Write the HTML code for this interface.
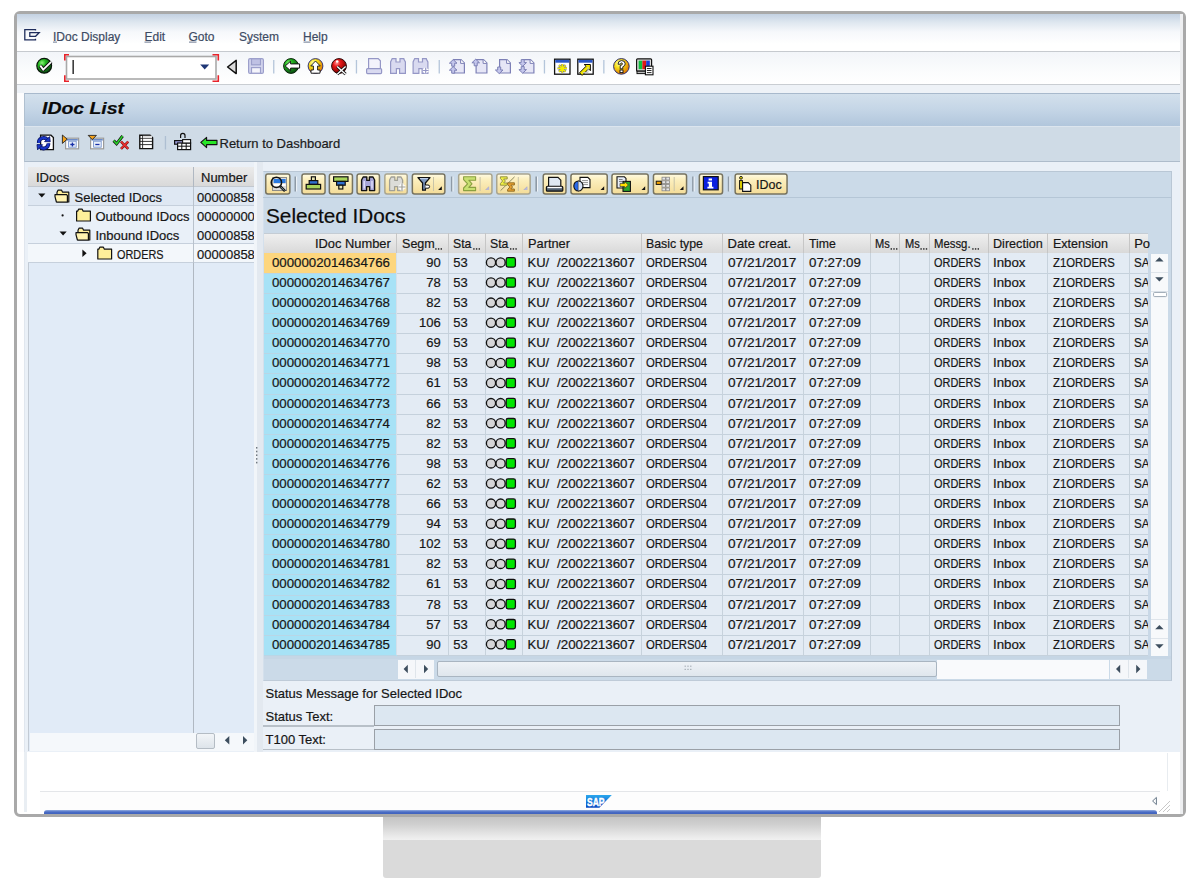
<!DOCTYPE html>
<html><head><meta charset="utf-8"><title>IDoc List</title>
<style>
html,body{margin:0;padding:0;width:1200px;height:888px;overflow:hidden;background:#fff;}
body{position:relative;font-family:"Liberation Sans",sans-serif;}
body>div,body>span,body>svg{position:absolute;box-sizing:border-box;}
.t{white-space:pre;-webkit-text-stroke-width:0.2px;}
</style></head><body>
<div style="left:383px;top:817px;width:438px;height:24px;background:linear-gradient(#c4c4c4,#cfcfcf 30%,#ececec 85%,#f2f2f2);"></div>
<div style="left:383px;top:840px;width:438px;height:38px;background:#dadada;border-radius:0 0 3px 3px;"></div>
<div style="left:14px;top:11px;width:1172px;height:806px;border:3px solid #a9a9a9;border-radius:6px;background:#fff;"></div>
<div style="left:17px;top:14px;width:1163px;height:37px;background:linear-gradient(#c3d1e2 0px,#dde6ef 8px,#f6f8fb 18px,#ffffff 30px);"></div>
<div style="left:17px;top:51px;width:1163px;height:1px;background:#c6cacf;"></div>
<div style="left:17px;top:52px;width:1163px;height:32px;background:linear-gradient(#f2f5f9,#fbfcfd 60%,#ffffff);"></div>
<div style="left:17px;top:84px;width:1163px;height:1px;background:#c9cdd2;"></div>
<div style="left:17px;top:85px;width:1163px;height:667px;background:#fdfdfe;"></div>
<div style="left:17px;top:85px;width:1163px;height:8px;background:#eef2f7;"></div>
<div style="left:24px;top:93px;width:1156px;height:33px;background:linear-gradient(#d3e0ec,#c4d5e6 50%,#b1c6dc);border-top:1px solid #a8b9cc;border-left:1px solid #b0c0d0;"></div>
<div style="left:24px;top:126px;width:1156px;height:36px;background:#cfdbe6;border-bottom:1.5px solid #aebccb;border-left:1px solid #b8c6d4;border-top:1px solid #dce5ee;"></div>
<div style="left:24px;top:162px;width:1156px;height:590px;background:#eaf0f7;border-left:1px solid #e0e6ee;"></div>
<div style="left:17px;top:752px;width:1163px;height:58px;background:#ffffff;"></div>
<div style="left:40px;top:791px;width:1120px;height:1px;background:#e4e6e9;"></div>
<div style="left:24px;top:752px;width:2.5px;height:60px;background:#e9eef3;"></div>
<div style="left:1167px;top:753px;width:1px;height:38px;background:#e8ecf0;"></div>
<div style="left:40px;top:792px;width:1120px;height:18px;background:#fdfdfd;"></div>
<div style="left:44px;top:810.3px;width:1113px;height:3.7px;background:linear-gradient(#93ade0,#4a6cc4 50%,#3f62bd);border-radius:3px 3px 0 0;"></div>
<div style="left:1180px;top:14px;width:3px;height:800px;background:#eeeff1;"></div>
<span class="t" style="left:53.00px;top:30.80px;font-size:12px;line-height:12px;color:#3d4b63;">IDoc Display</span>
<span class="t" style="left:144.50px;top:30.80px;font-size:12px;line-height:12px;color:#3d4b63;">Edit</span>
<span class="t" style="left:188.50px;top:30.80px;font-size:12px;line-height:12px;color:#3d4b63;">Goto</span>
<span class="t" style="left:239.00px;top:30.80px;font-size:12px;line-height:12px;color:#3d4b63;">System</span>
<span class="t" style="left:303.00px;top:30.80px;font-size:12px;line-height:12px;color:#3d4b63;">Help</span>
<span class="t" style="left:41.50px;top:101.40px;font-size:16px;line-height:16px;color:#0a0a0a;font-weight:bold;font-style:italic;transform:scaleX(1.214);transform-origin:0 0;">IDoc List</span>
<span class="t" style="left:219.50px;top:137.45px;font-size:13px;line-height:13px;color:#1c1c1c;">Return to Dashboard</span>
<div style="left:28px;top:167px;width:227px;height:584px;background:#e1ebf7;border-left:1.5px solid #c2cad4;"></div>
<div style="left:28px;top:167px;width:227px;height:20px;background:linear-gradient(#ebebeb,#d9d9d9);border-bottom:1px solid #c2c8cf;"></div>
<div style="left:193px;top:167px;width:1.3px;height:583px;background:#b0b8c2;"></div>
<div style="left:28px;top:187px;width:227px;height:19px;background:#dfe8f3;border-bottom:1px solid #c6d0dc;"></div>
<div style="left:28px;top:206px;width:227px;height:38px;background:#e9f0f8;border-bottom:1px solid #c6d0dc;"></div>
<div style="left:28px;top:244px;width:227px;height:19px;background:#f3f7fb;border-bottom:1px solid #c6d0dc;"></div>
<div style="left:193px;top:187px;width:1px;height:76px;background:#b9c2cc;"></div>
<span class="t" style="left:36.00px;top:170.95px;font-size:13px;line-height:13px;color:#161616;">IDocs</span>
<span class="t" style="left:201.00px;top:170.95px;font-size:13px;line-height:13px;color:#161616;">Number</span>
<span class="t" style="left:74.50px;top:190.95px;font-size:13px;line-height:13px;color:#161616;">Selected IDocs</span>
<span class="t" style="left:95.50px;top:209.95px;font-size:13px;line-height:13px;color:#161616;">Outbound IDocs</span>
<span class="t" style="left:95.50px;top:228.95px;font-size:13px;line-height:13px;color:#161616;">Inbound IDocs</span>
<span class="t" style="left:117.00px;top:247.95px;font-size:13px;line-height:13px;color:#161616;transform:scaleX(0.836);transform-origin:0 0;">ORDERS</span>
<span class="t" style="left:197.00px;top:190.95px;font-size:13px;line-height:13px;color:#161616;">00000858</span>
<span class="t" style="left:197.00px;top:209.95px;font-size:13px;line-height:13px;color:#161616;">00000000</span>
<span class="t" style="left:197.00px;top:228.95px;font-size:13px;line-height:13px;color:#161616;">00000858</span>
<span class="t" style="left:197.00px;top:247.95px;font-size:13px;line-height:13px;color:#161616;">00000858</span>
<div style="left:29.5px;top:732.5px;width:225px;height:18px;background:#f5f8fb;"></div>
<div style="left:196.3px;top:733.1px;width:19px;height:16px;background:linear-gradient(#f2f5f8,#dde4ea);border:1.3px solid #b4bcc4;border-radius:2px;"></div>
<div style="left:254px;top:162px;width:3px;height:590px;background:#f1f5f9;"></div>
<div style="left:257px;top:162px;width:6px;height:590px;background:#e3e9f0;"></div>
<div style="left:263px;top:171px;width:909px;height:510px;background:#cbdae8;border-top:1px solid #b9c7d5;border-right:1px solid #b9c7d5;border-left:1px solid #d4e0ec;border-bottom:1px solid #bfcbd8;"></div>
<div style="left:263px;top:196.5px;width:908px;height:1px;background:#b5c6d6;"></div>
<span class="t" style="left:266.40px;top:205.15px;font-size:21px;line-height:21px;color:#0c0c0c;transform:scaleX(0.988);transform-origin:0 0;">Selected IDocs</span>
<div style="left:264px;top:233px;width:884px;height:20.5px;background:linear-gradient(#efefef,#d9d9d9);border-top:1px solid #c4ccd4;border-bottom:1px solid #bcc5ce;"></div>
<div style="left:396.0px;top:233px;width:1px;height:20px;background:#c6c6c6;"></div>
<div style="left:448.0px;top:233px;width:1px;height:20px;background:#c6c6c6;"></div>
<div style="left:485.0px;top:233px;width:1px;height:20px;background:#c6c6c6;"></div>
<div style="left:522.0px;top:233px;width:1px;height:20px;background:#c6c6c6;"></div>
<div style="left:640.5px;top:233px;width:1px;height:20px;background:#c6c6c6;"></div>
<div style="left:722.0px;top:233px;width:1px;height:20px;background:#c6c6c6;"></div>
<div style="left:803.0px;top:233px;width:1px;height:20px;background:#c6c6c6;"></div>
<div style="left:870.0px;top:233px;width:1px;height:20px;background:#c6c6c6;"></div>
<div style="left:899.0px;top:233px;width:1px;height:20px;background:#c6c6c6;"></div>
<div style="left:929.0px;top:233px;width:1px;height:20px;background:#c6c6c6;"></div>
<div style="left:988.0px;top:233px;width:1px;height:20px;background:#c6c6c6;"></div>
<div style="left:1047.0px;top:233px;width:1px;height:20px;background:#c6c6c6;"></div>
<div style="left:1128.5px;top:233px;width:1px;height:20px;background:#c6c6c6;"></div>
<span class="t" style="left:315.00px;top:236.95px;font-size:13px;line-height:13px;color:#161616;transform:scaleX(0.990);transform-origin:0 0;">IDoc Number</span>
<span class="t" style="left:401.70px;top:236.95px;font-size:13px;line-height:13px;color:#161616;transform:scaleX(0.966);transform-origin:0 0;">Segm</span>
<span class="t" style="left:453.30px;top:236.95px;font-size:13px;line-height:13px;color:#161616;transform:scaleX(0.943);transform-origin:0 0;">Sta</span>
<span class="t" style="left:490.00px;top:236.95px;font-size:13px;line-height:13px;color:#161616;transform:scaleX(0.943);transform-origin:0 0;">Sta</span>
<span class="t" style="left:527.50px;top:236.95px;font-size:13px;line-height:13px;color:#161616;transform:scaleX(0.985);transform-origin:0 0;">Partner</span>
<span class="t" style="left:645.80px;top:236.95px;font-size:13px;line-height:13px;color:#161616;transform:scaleX(0.950);transform-origin:0 0;">Basic type</span>
<span class="t" style="left:727.50px;top:236.95px;font-size:13px;line-height:13px;color:#161616;">Date creat.</span>
<span class="t" style="left:809.00px;top:236.95px;font-size:13px;line-height:13px;color:#161616;transform:scaleX(0.943);transform-origin:0 0;">Time</span>
<span class="t" style="left:875.00px;top:236.95px;font-size:13px;line-height:13px;color:#161616;transform:scaleX(0.853);transform-origin:0 0;">Ms</span>
<span class="t" style="left:905.00px;top:236.95px;font-size:13px;line-height:13px;color:#161616;transform:scaleX(0.853);transform-origin:0 0;">Ms</span>
<span class="t" style="left:934.00px;top:236.95px;font-size:13px;line-height:13px;color:#161616;transform:scaleX(0.873);transform-origin:0 0;">Messg.</span>
<span class="t" style="left:993.30px;top:236.95px;font-size:13px;line-height:13px;color:#161616;transform:scaleX(0.969);transform-origin:0 0;">Direction</span>
<span class="t" style="left:1052.50px;top:236.95px;font-size:13px;line-height:13px;color:#161616;transform:scaleX(0.963);transform-origin:0 0;">Extension</span>
<span class="t" style="left:1134.20px;top:236.95px;font-size:13px;line-height:13px;color:#161616;">Po</span>
<div style="left:264px;top:253.3px;width:132.5px;height:20.6px;background:#fdd67e;"></div>
<div style="left:396.5px;top:253.3px;width:751.5px;height:20.6px;background:#e3ebf4;"></div>
<div style="left:264px;top:273.4px;width:132.5px;height:20.6px;background:#a7e2f6;"></div>
<div style="left:396.5px;top:273.4px;width:751.5px;height:20.6px;background:#e3ebf4;"></div>
<div style="left:264px;top:293.5px;width:132.5px;height:20.6px;background:#a7e2f6;"></div>
<div style="left:396.5px;top:293.5px;width:751.5px;height:20.6px;background:#e3ebf4;"></div>
<div style="left:264px;top:313.6px;width:132.5px;height:20.6px;background:#a7e2f6;"></div>
<div style="left:396.5px;top:313.6px;width:751.5px;height:20.6px;background:#e3ebf4;"></div>
<div style="left:264px;top:333.7px;width:132.5px;height:20.6px;background:#a7e2f6;"></div>
<div style="left:396.5px;top:333.7px;width:751.5px;height:20.6px;background:#e3ebf4;"></div>
<div style="left:264px;top:353.8px;width:132.5px;height:20.6px;background:#a7e2f6;"></div>
<div style="left:396.5px;top:353.8px;width:751.5px;height:20.6px;background:#e3ebf4;"></div>
<div style="left:264px;top:373.9px;width:132.5px;height:20.6px;background:#a7e2f6;"></div>
<div style="left:396.5px;top:373.9px;width:751.5px;height:20.6px;background:#e3ebf4;"></div>
<div style="left:264px;top:394.0px;width:132.5px;height:20.6px;background:#a7e2f6;"></div>
<div style="left:396.5px;top:394.0px;width:751.5px;height:20.6px;background:#e3ebf4;"></div>
<div style="left:264px;top:414.1px;width:132.5px;height:20.6px;background:#a7e2f6;"></div>
<div style="left:396.5px;top:414.1px;width:751.5px;height:20.6px;background:#e3ebf4;"></div>
<div style="left:264px;top:434.2px;width:132.5px;height:20.6px;background:#a7e2f6;"></div>
<div style="left:396.5px;top:434.2px;width:751.5px;height:20.6px;background:#e3ebf4;"></div>
<div style="left:264px;top:454.3px;width:132.5px;height:20.6px;background:#a7e2f6;"></div>
<div style="left:396.5px;top:454.3px;width:751.5px;height:20.6px;background:#e3ebf4;"></div>
<div style="left:264px;top:474.4px;width:132.5px;height:20.6px;background:#a7e2f6;"></div>
<div style="left:396.5px;top:474.4px;width:751.5px;height:20.6px;background:#e3ebf4;"></div>
<div style="left:264px;top:494.5px;width:132.5px;height:20.6px;background:#a7e2f6;"></div>
<div style="left:396.5px;top:494.5px;width:751.5px;height:20.6px;background:#e3ebf4;"></div>
<div style="left:264px;top:514.6px;width:132.5px;height:20.6px;background:#a7e2f6;"></div>
<div style="left:396.5px;top:514.6px;width:751.5px;height:20.6px;background:#e3ebf4;"></div>
<div style="left:264px;top:534.7px;width:132.5px;height:20.6px;background:#a7e2f6;"></div>
<div style="left:396.5px;top:534.7px;width:751.5px;height:20.6px;background:#e3ebf4;"></div>
<div style="left:264px;top:554.8px;width:132.5px;height:20.6px;background:#a7e2f6;"></div>
<div style="left:396.5px;top:554.8px;width:751.5px;height:20.6px;background:#e3ebf4;"></div>
<div style="left:264px;top:574.9px;width:132.5px;height:20.6px;background:#a7e2f6;"></div>
<div style="left:396.5px;top:574.9px;width:751.5px;height:20.6px;background:#e3ebf4;"></div>
<div style="left:264px;top:595.0px;width:132.5px;height:20.6px;background:#a7e2f6;"></div>
<div style="left:396.5px;top:595.0px;width:751.5px;height:20.6px;background:#e3ebf4;"></div>
<div style="left:264px;top:615.1px;width:132.5px;height:20.6px;background:#a7e2f6;"></div>
<div style="left:396.5px;top:615.1px;width:751.5px;height:20.6px;background:#e3ebf4;"></div>
<div style="left:264px;top:635.2px;width:132.5px;height:20.6px;background:#a7e2f6;"></div>
<div style="left:396.5px;top:635.2px;width:751.5px;height:20.6px;background:#e3ebf4;"></div>
<div style="left:264px;top:272.9px;width:132px;height:1px;background:#b9d6e6;"></div>
<div style="left:396.5px;top:272.9px;width:751.5px;height:1px;background:#c5d1dc;"></div>
<div style="left:264px;top:293.0px;width:132px;height:1px;background:#b9d6e6;"></div>
<div style="left:396.5px;top:293.0px;width:751.5px;height:1px;background:#c5d1dc;"></div>
<div style="left:264px;top:313.1px;width:132px;height:1px;background:#b9d6e6;"></div>
<div style="left:396.5px;top:313.1px;width:751.5px;height:1px;background:#c5d1dc;"></div>
<div style="left:264px;top:333.2px;width:132px;height:1px;background:#b9d6e6;"></div>
<div style="left:396.5px;top:333.2px;width:751.5px;height:1px;background:#c5d1dc;"></div>
<div style="left:264px;top:353.3px;width:132px;height:1px;background:#b9d6e6;"></div>
<div style="left:396.5px;top:353.3px;width:751.5px;height:1px;background:#c5d1dc;"></div>
<div style="left:264px;top:373.4px;width:132px;height:1px;background:#b9d6e6;"></div>
<div style="left:396.5px;top:373.4px;width:751.5px;height:1px;background:#c5d1dc;"></div>
<div style="left:264px;top:393.5px;width:132px;height:1px;background:#b9d6e6;"></div>
<div style="left:396.5px;top:393.5px;width:751.5px;height:1px;background:#c5d1dc;"></div>
<div style="left:264px;top:413.6px;width:132px;height:1px;background:#b9d6e6;"></div>
<div style="left:396.5px;top:413.6px;width:751.5px;height:1px;background:#c5d1dc;"></div>
<div style="left:264px;top:433.7px;width:132px;height:1px;background:#b9d6e6;"></div>
<div style="left:396.5px;top:433.7px;width:751.5px;height:1px;background:#c5d1dc;"></div>
<div style="left:264px;top:453.8px;width:132px;height:1px;background:#b9d6e6;"></div>
<div style="left:396.5px;top:453.8px;width:751.5px;height:1px;background:#c5d1dc;"></div>
<div style="left:264px;top:473.9px;width:132px;height:1px;background:#b9d6e6;"></div>
<div style="left:396.5px;top:473.9px;width:751.5px;height:1px;background:#c5d1dc;"></div>
<div style="left:264px;top:494.0px;width:132px;height:1px;background:#b9d6e6;"></div>
<div style="left:396.5px;top:494.0px;width:751.5px;height:1px;background:#c5d1dc;"></div>
<div style="left:264px;top:514.1px;width:132px;height:1px;background:#b9d6e6;"></div>
<div style="left:396.5px;top:514.1px;width:751.5px;height:1px;background:#c5d1dc;"></div>
<div style="left:264px;top:534.2px;width:132px;height:1px;background:#b9d6e6;"></div>
<div style="left:396.5px;top:534.2px;width:751.5px;height:1px;background:#c5d1dc;"></div>
<div style="left:264px;top:554.3px;width:132px;height:1px;background:#b9d6e6;"></div>
<div style="left:396.5px;top:554.3px;width:751.5px;height:1px;background:#c5d1dc;"></div>
<div style="left:264px;top:574.4px;width:132px;height:1px;background:#b9d6e6;"></div>
<div style="left:396.5px;top:574.4px;width:751.5px;height:1px;background:#c5d1dc;"></div>
<div style="left:264px;top:594.5px;width:132px;height:1px;background:#b9d6e6;"></div>
<div style="left:396.5px;top:594.5px;width:751.5px;height:1px;background:#c5d1dc;"></div>
<div style="left:264px;top:614.6px;width:132px;height:1px;background:#b9d6e6;"></div>
<div style="left:396.5px;top:614.6px;width:751.5px;height:1px;background:#c5d1dc;"></div>
<div style="left:264px;top:634.7px;width:132px;height:1px;background:#b9d6e6;"></div>
<div style="left:396.5px;top:634.7px;width:751.5px;height:1px;background:#c5d1dc;"></div>
<div style="left:264px;top:654.8px;width:132px;height:1px;background:#b9d6e6;"></div>
<div style="left:396.5px;top:654.8px;width:751.5px;height:1px;background:#c5d1dc;"></div>
<div style="left:448.0px;top:253.3px;width:1px;height:402.0px;background:#c7d2dc;"></div>
<div style="left:485.0px;top:253.3px;width:1px;height:402.0px;background:#c7d2dc;"></div>
<div style="left:522.0px;top:253.3px;width:1px;height:402.0px;background:#c7d2dc;"></div>
<div style="left:640.5px;top:253.3px;width:1px;height:402.0px;background:#c7d2dc;"></div>
<div style="left:722.0px;top:253.3px;width:1px;height:402.0px;background:#c7d2dc;"></div>
<div style="left:803.0px;top:253.3px;width:1px;height:402.0px;background:#c7d2dc;"></div>
<div style="left:870.0px;top:253.3px;width:1px;height:402.0px;background:#c7d2dc;"></div>
<div style="left:899.0px;top:253.3px;width:1px;height:402.0px;background:#c7d2dc;"></div>
<div style="left:929.0px;top:253.3px;width:1px;height:402.0px;background:#c7d2dc;"></div>
<div style="left:988.0px;top:253.3px;width:1px;height:402.0px;background:#c7d2dc;"></div>
<div style="left:1047.0px;top:253.3px;width:1px;height:402.0px;background:#c7d2dc;"></div>
<div style="left:1128.5px;top:253.3px;width:1px;height:402.0px;background:#c7d2dc;"></div>
<div style="left:396px;top:253.3px;width:1px;height:402.0px;background:#d5e0ea;"></div>
<span class="t" style="left:271.70px;top:255.85px;font-size:13px;line-height:13px;color:#161616;transform:scaleX(1.020);transform-origin:0 0;">0000002014634766</span>
<span class="t" style="left:426.33px;top:255.85px;font-size:13px;line-height:13px;color:#161616;">90</span>
<span class="t" style="left:453.30px;top:255.85px;font-size:13px;line-height:13px;color:#161616;">53</span>
<span class="t" style="left:527.50px;top:255.85px;font-size:13px;line-height:13px;color:#161616;">KU/</span>
<span class="t" style="left:557.00px;top:255.85px;font-size:13px;line-height:13px;color:#161616;transform:scaleX(1.027);transform-origin:0 0;">/2002213607</span>
<span class="t" style="left:645.80px;top:255.85px;font-size:13px;line-height:13px;color:#161616;transform:scaleX(0.873);transform-origin:0 0;">ORDERS04</span>
<span class="t" style="left:727.50px;top:255.85px;font-size:13px;line-height:13px;color:#161616;transform:scaleX(1.050);transform-origin:0 0;">07/21/2017</span>
<span class="t" style="left:809.00px;top:255.85px;font-size:13px;line-height:13px;color:#161616;transform:scaleX(1.024);transform-origin:0 0;">07:27:09</span>
<span class="t" style="left:934.00px;top:255.85px;font-size:13px;line-height:13px;color:#161616;transform:scaleX(0.841);transform-origin:0 0;">ORDERS</span>
<span class="t" style="left:993.30px;top:255.85px;font-size:13px;line-height:13px;color:#161616;transform:scaleX(1.022);transform-origin:0 0;">Inbox</span>
<span class="t" style="left:1052.50px;top:255.85px;font-size:13px;line-height:13px;color:#161616;transform:scaleX(0.872);transform-origin:0 0;">Z1ORDERS</span>
<span class="t" style="left:1134.20px;top:255.85px;font-size:13px;line-height:13px;color:#161616;transform:scaleX(0.894);transform-origin:0 0;">SA</span>
<span class="t" style="left:271.70px;top:275.95px;font-size:13px;line-height:13px;color:#161616;transform:scaleX(1.020);transform-origin:0 0;">0000002014634767</span>
<span class="t" style="left:426.33px;top:275.95px;font-size:13px;line-height:13px;color:#161616;">78</span>
<span class="t" style="left:453.30px;top:275.95px;font-size:13px;line-height:13px;color:#161616;">53</span>
<span class="t" style="left:527.50px;top:275.95px;font-size:13px;line-height:13px;color:#161616;">KU/</span>
<span class="t" style="left:557.00px;top:275.95px;font-size:13px;line-height:13px;color:#161616;transform:scaleX(1.027);transform-origin:0 0;">/2002213607</span>
<span class="t" style="left:645.80px;top:275.95px;font-size:13px;line-height:13px;color:#161616;transform:scaleX(0.873);transform-origin:0 0;">ORDERS04</span>
<span class="t" style="left:727.50px;top:275.95px;font-size:13px;line-height:13px;color:#161616;transform:scaleX(1.050);transform-origin:0 0;">07/21/2017</span>
<span class="t" style="left:809.00px;top:275.95px;font-size:13px;line-height:13px;color:#161616;transform:scaleX(1.024);transform-origin:0 0;">07:27:09</span>
<span class="t" style="left:934.00px;top:275.95px;font-size:13px;line-height:13px;color:#161616;transform:scaleX(0.841);transform-origin:0 0;">ORDERS</span>
<span class="t" style="left:993.30px;top:275.95px;font-size:13px;line-height:13px;color:#161616;transform:scaleX(1.022);transform-origin:0 0;">Inbox</span>
<span class="t" style="left:1052.50px;top:275.95px;font-size:13px;line-height:13px;color:#161616;transform:scaleX(0.872);transform-origin:0 0;">Z1ORDERS</span>
<span class="t" style="left:1134.20px;top:275.95px;font-size:13px;line-height:13px;color:#161616;transform:scaleX(0.894);transform-origin:0 0;">SA</span>
<span class="t" style="left:271.70px;top:296.05px;font-size:13px;line-height:13px;color:#161616;transform:scaleX(1.020);transform-origin:0 0;">0000002014634768</span>
<span class="t" style="left:426.33px;top:296.05px;font-size:13px;line-height:13px;color:#161616;">82</span>
<span class="t" style="left:453.30px;top:296.05px;font-size:13px;line-height:13px;color:#161616;">53</span>
<span class="t" style="left:527.50px;top:296.05px;font-size:13px;line-height:13px;color:#161616;">KU/</span>
<span class="t" style="left:557.00px;top:296.05px;font-size:13px;line-height:13px;color:#161616;transform:scaleX(1.027);transform-origin:0 0;">/2002213607</span>
<span class="t" style="left:645.80px;top:296.05px;font-size:13px;line-height:13px;color:#161616;transform:scaleX(0.873);transform-origin:0 0;">ORDERS04</span>
<span class="t" style="left:727.50px;top:296.05px;font-size:13px;line-height:13px;color:#161616;transform:scaleX(1.050);transform-origin:0 0;">07/21/2017</span>
<span class="t" style="left:809.00px;top:296.05px;font-size:13px;line-height:13px;color:#161616;transform:scaleX(1.024);transform-origin:0 0;">07:27:09</span>
<span class="t" style="left:934.00px;top:296.05px;font-size:13px;line-height:13px;color:#161616;transform:scaleX(0.841);transform-origin:0 0;">ORDERS</span>
<span class="t" style="left:993.30px;top:296.05px;font-size:13px;line-height:13px;color:#161616;transform:scaleX(1.022);transform-origin:0 0;">Inbox</span>
<span class="t" style="left:1052.50px;top:296.05px;font-size:13px;line-height:13px;color:#161616;transform:scaleX(0.872);transform-origin:0 0;">Z1ORDERS</span>
<span class="t" style="left:1134.20px;top:296.05px;font-size:13px;line-height:13px;color:#161616;transform:scaleX(0.894);transform-origin:0 0;">SA</span>
<span class="t" style="left:271.70px;top:316.15px;font-size:13px;line-height:13px;color:#161616;transform:scaleX(1.020);transform-origin:0 0;">0000002014634769</span>
<span class="t" style="left:419.10px;top:316.15px;font-size:13px;line-height:13px;color:#161616;">106</span>
<span class="t" style="left:453.30px;top:316.15px;font-size:13px;line-height:13px;color:#161616;">53</span>
<span class="t" style="left:527.50px;top:316.15px;font-size:13px;line-height:13px;color:#161616;">KU/</span>
<span class="t" style="left:557.00px;top:316.15px;font-size:13px;line-height:13px;color:#161616;transform:scaleX(1.027);transform-origin:0 0;">/2002213607</span>
<span class="t" style="left:645.80px;top:316.15px;font-size:13px;line-height:13px;color:#161616;transform:scaleX(0.873);transform-origin:0 0;">ORDERS04</span>
<span class="t" style="left:727.50px;top:316.15px;font-size:13px;line-height:13px;color:#161616;transform:scaleX(1.050);transform-origin:0 0;">07/21/2017</span>
<span class="t" style="left:809.00px;top:316.15px;font-size:13px;line-height:13px;color:#161616;transform:scaleX(1.024);transform-origin:0 0;">07:27:09</span>
<span class="t" style="left:934.00px;top:316.15px;font-size:13px;line-height:13px;color:#161616;transform:scaleX(0.841);transform-origin:0 0;">ORDERS</span>
<span class="t" style="left:993.30px;top:316.15px;font-size:13px;line-height:13px;color:#161616;transform:scaleX(1.022);transform-origin:0 0;">Inbox</span>
<span class="t" style="left:1052.50px;top:316.15px;font-size:13px;line-height:13px;color:#161616;transform:scaleX(0.872);transform-origin:0 0;">Z1ORDERS</span>
<span class="t" style="left:1134.20px;top:316.15px;font-size:13px;line-height:13px;color:#161616;transform:scaleX(0.894);transform-origin:0 0;">SA</span>
<span class="t" style="left:271.70px;top:336.25px;font-size:13px;line-height:13px;color:#161616;transform:scaleX(1.020);transform-origin:0 0;">0000002014634770</span>
<span class="t" style="left:426.33px;top:336.25px;font-size:13px;line-height:13px;color:#161616;">69</span>
<span class="t" style="left:453.30px;top:336.25px;font-size:13px;line-height:13px;color:#161616;">53</span>
<span class="t" style="left:527.50px;top:336.25px;font-size:13px;line-height:13px;color:#161616;">KU/</span>
<span class="t" style="left:557.00px;top:336.25px;font-size:13px;line-height:13px;color:#161616;transform:scaleX(1.027);transform-origin:0 0;">/2002213607</span>
<span class="t" style="left:645.80px;top:336.25px;font-size:13px;line-height:13px;color:#161616;transform:scaleX(0.873);transform-origin:0 0;">ORDERS04</span>
<span class="t" style="left:727.50px;top:336.25px;font-size:13px;line-height:13px;color:#161616;transform:scaleX(1.050);transform-origin:0 0;">07/21/2017</span>
<span class="t" style="left:809.00px;top:336.25px;font-size:13px;line-height:13px;color:#161616;transform:scaleX(1.024);transform-origin:0 0;">07:27:09</span>
<span class="t" style="left:934.00px;top:336.25px;font-size:13px;line-height:13px;color:#161616;transform:scaleX(0.841);transform-origin:0 0;">ORDERS</span>
<span class="t" style="left:993.30px;top:336.25px;font-size:13px;line-height:13px;color:#161616;transform:scaleX(1.022);transform-origin:0 0;">Inbox</span>
<span class="t" style="left:1052.50px;top:336.25px;font-size:13px;line-height:13px;color:#161616;transform:scaleX(0.872);transform-origin:0 0;">Z1ORDERS</span>
<span class="t" style="left:1134.20px;top:336.25px;font-size:13px;line-height:13px;color:#161616;transform:scaleX(0.894);transform-origin:0 0;">SA</span>
<span class="t" style="left:271.70px;top:356.35px;font-size:13px;line-height:13px;color:#161616;transform:scaleX(1.020);transform-origin:0 0;">0000002014634771</span>
<span class="t" style="left:426.33px;top:356.35px;font-size:13px;line-height:13px;color:#161616;">98</span>
<span class="t" style="left:453.30px;top:356.35px;font-size:13px;line-height:13px;color:#161616;">53</span>
<span class="t" style="left:527.50px;top:356.35px;font-size:13px;line-height:13px;color:#161616;">KU/</span>
<span class="t" style="left:557.00px;top:356.35px;font-size:13px;line-height:13px;color:#161616;transform:scaleX(1.027);transform-origin:0 0;">/2002213607</span>
<span class="t" style="left:645.80px;top:356.35px;font-size:13px;line-height:13px;color:#161616;transform:scaleX(0.873);transform-origin:0 0;">ORDERS04</span>
<span class="t" style="left:727.50px;top:356.35px;font-size:13px;line-height:13px;color:#161616;transform:scaleX(1.050);transform-origin:0 0;">07/21/2017</span>
<span class="t" style="left:809.00px;top:356.35px;font-size:13px;line-height:13px;color:#161616;transform:scaleX(1.024);transform-origin:0 0;">07:27:09</span>
<span class="t" style="left:934.00px;top:356.35px;font-size:13px;line-height:13px;color:#161616;transform:scaleX(0.841);transform-origin:0 0;">ORDERS</span>
<span class="t" style="left:993.30px;top:356.35px;font-size:13px;line-height:13px;color:#161616;transform:scaleX(1.022);transform-origin:0 0;">Inbox</span>
<span class="t" style="left:1052.50px;top:356.35px;font-size:13px;line-height:13px;color:#161616;transform:scaleX(0.872);transform-origin:0 0;">Z1ORDERS</span>
<span class="t" style="left:1134.20px;top:356.35px;font-size:13px;line-height:13px;color:#161616;transform:scaleX(0.894);transform-origin:0 0;">SA</span>
<span class="t" style="left:271.70px;top:376.45px;font-size:13px;line-height:13px;color:#161616;transform:scaleX(1.020);transform-origin:0 0;">0000002014634772</span>
<span class="t" style="left:426.33px;top:376.45px;font-size:13px;line-height:13px;color:#161616;">61</span>
<span class="t" style="left:453.30px;top:376.45px;font-size:13px;line-height:13px;color:#161616;">53</span>
<span class="t" style="left:527.50px;top:376.45px;font-size:13px;line-height:13px;color:#161616;">KU/</span>
<span class="t" style="left:557.00px;top:376.45px;font-size:13px;line-height:13px;color:#161616;transform:scaleX(1.027);transform-origin:0 0;">/2002213607</span>
<span class="t" style="left:645.80px;top:376.45px;font-size:13px;line-height:13px;color:#161616;transform:scaleX(0.873);transform-origin:0 0;">ORDERS04</span>
<span class="t" style="left:727.50px;top:376.45px;font-size:13px;line-height:13px;color:#161616;transform:scaleX(1.050);transform-origin:0 0;">07/21/2017</span>
<span class="t" style="left:809.00px;top:376.45px;font-size:13px;line-height:13px;color:#161616;transform:scaleX(1.024);transform-origin:0 0;">07:27:09</span>
<span class="t" style="left:934.00px;top:376.45px;font-size:13px;line-height:13px;color:#161616;transform:scaleX(0.841);transform-origin:0 0;">ORDERS</span>
<span class="t" style="left:993.30px;top:376.45px;font-size:13px;line-height:13px;color:#161616;transform:scaleX(1.022);transform-origin:0 0;">Inbox</span>
<span class="t" style="left:1052.50px;top:376.45px;font-size:13px;line-height:13px;color:#161616;transform:scaleX(0.872);transform-origin:0 0;">Z1ORDERS</span>
<span class="t" style="left:1134.20px;top:376.45px;font-size:13px;line-height:13px;color:#161616;transform:scaleX(0.894);transform-origin:0 0;">SA</span>
<span class="t" style="left:271.70px;top:396.55px;font-size:13px;line-height:13px;color:#161616;transform:scaleX(1.020);transform-origin:0 0;">0000002014634773</span>
<span class="t" style="left:426.33px;top:396.55px;font-size:13px;line-height:13px;color:#161616;">66</span>
<span class="t" style="left:453.30px;top:396.55px;font-size:13px;line-height:13px;color:#161616;">53</span>
<span class="t" style="left:527.50px;top:396.55px;font-size:13px;line-height:13px;color:#161616;">KU/</span>
<span class="t" style="left:557.00px;top:396.55px;font-size:13px;line-height:13px;color:#161616;transform:scaleX(1.027);transform-origin:0 0;">/2002213607</span>
<span class="t" style="left:645.80px;top:396.55px;font-size:13px;line-height:13px;color:#161616;transform:scaleX(0.873);transform-origin:0 0;">ORDERS04</span>
<span class="t" style="left:727.50px;top:396.55px;font-size:13px;line-height:13px;color:#161616;transform:scaleX(1.050);transform-origin:0 0;">07/21/2017</span>
<span class="t" style="left:809.00px;top:396.55px;font-size:13px;line-height:13px;color:#161616;transform:scaleX(1.024);transform-origin:0 0;">07:27:09</span>
<span class="t" style="left:934.00px;top:396.55px;font-size:13px;line-height:13px;color:#161616;transform:scaleX(0.841);transform-origin:0 0;">ORDERS</span>
<span class="t" style="left:993.30px;top:396.55px;font-size:13px;line-height:13px;color:#161616;transform:scaleX(1.022);transform-origin:0 0;">Inbox</span>
<span class="t" style="left:1052.50px;top:396.55px;font-size:13px;line-height:13px;color:#161616;transform:scaleX(0.872);transform-origin:0 0;">Z1ORDERS</span>
<span class="t" style="left:1134.20px;top:396.55px;font-size:13px;line-height:13px;color:#161616;transform:scaleX(0.894);transform-origin:0 0;">SA</span>
<span class="t" style="left:271.70px;top:416.65px;font-size:13px;line-height:13px;color:#161616;transform:scaleX(1.020);transform-origin:0 0;">0000002014634774</span>
<span class="t" style="left:426.33px;top:416.65px;font-size:13px;line-height:13px;color:#161616;">82</span>
<span class="t" style="left:453.30px;top:416.65px;font-size:13px;line-height:13px;color:#161616;">53</span>
<span class="t" style="left:527.50px;top:416.65px;font-size:13px;line-height:13px;color:#161616;">KU/</span>
<span class="t" style="left:557.00px;top:416.65px;font-size:13px;line-height:13px;color:#161616;transform:scaleX(1.027);transform-origin:0 0;">/2002213607</span>
<span class="t" style="left:645.80px;top:416.65px;font-size:13px;line-height:13px;color:#161616;transform:scaleX(0.873);transform-origin:0 0;">ORDERS04</span>
<span class="t" style="left:727.50px;top:416.65px;font-size:13px;line-height:13px;color:#161616;transform:scaleX(1.050);transform-origin:0 0;">07/21/2017</span>
<span class="t" style="left:809.00px;top:416.65px;font-size:13px;line-height:13px;color:#161616;transform:scaleX(1.024);transform-origin:0 0;">07:27:09</span>
<span class="t" style="left:934.00px;top:416.65px;font-size:13px;line-height:13px;color:#161616;transform:scaleX(0.841);transform-origin:0 0;">ORDERS</span>
<span class="t" style="left:993.30px;top:416.65px;font-size:13px;line-height:13px;color:#161616;transform:scaleX(1.022);transform-origin:0 0;">Inbox</span>
<span class="t" style="left:1052.50px;top:416.65px;font-size:13px;line-height:13px;color:#161616;transform:scaleX(0.872);transform-origin:0 0;">Z1ORDERS</span>
<span class="t" style="left:1134.20px;top:416.65px;font-size:13px;line-height:13px;color:#161616;transform:scaleX(0.894);transform-origin:0 0;">SA</span>
<span class="t" style="left:271.70px;top:436.75px;font-size:13px;line-height:13px;color:#161616;transform:scaleX(1.020);transform-origin:0 0;">0000002014634775</span>
<span class="t" style="left:426.33px;top:436.75px;font-size:13px;line-height:13px;color:#161616;">82</span>
<span class="t" style="left:453.30px;top:436.75px;font-size:13px;line-height:13px;color:#161616;">53</span>
<span class="t" style="left:527.50px;top:436.75px;font-size:13px;line-height:13px;color:#161616;">KU/</span>
<span class="t" style="left:557.00px;top:436.75px;font-size:13px;line-height:13px;color:#161616;transform:scaleX(1.027);transform-origin:0 0;">/2002213607</span>
<span class="t" style="left:645.80px;top:436.75px;font-size:13px;line-height:13px;color:#161616;transform:scaleX(0.873);transform-origin:0 0;">ORDERS04</span>
<span class="t" style="left:727.50px;top:436.75px;font-size:13px;line-height:13px;color:#161616;transform:scaleX(1.050);transform-origin:0 0;">07/21/2017</span>
<span class="t" style="left:809.00px;top:436.75px;font-size:13px;line-height:13px;color:#161616;transform:scaleX(1.024);transform-origin:0 0;">07:27:09</span>
<span class="t" style="left:934.00px;top:436.75px;font-size:13px;line-height:13px;color:#161616;transform:scaleX(0.841);transform-origin:0 0;">ORDERS</span>
<span class="t" style="left:993.30px;top:436.75px;font-size:13px;line-height:13px;color:#161616;transform:scaleX(1.022);transform-origin:0 0;">Inbox</span>
<span class="t" style="left:1052.50px;top:436.75px;font-size:13px;line-height:13px;color:#161616;transform:scaleX(0.872);transform-origin:0 0;">Z1ORDERS</span>
<span class="t" style="left:1134.20px;top:436.75px;font-size:13px;line-height:13px;color:#161616;transform:scaleX(0.894);transform-origin:0 0;">SA</span>
<span class="t" style="left:271.70px;top:456.85px;font-size:13px;line-height:13px;color:#161616;transform:scaleX(1.020);transform-origin:0 0;">0000002014634776</span>
<span class="t" style="left:426.33px;top:456.85px;font-size:13px;line-height:13px;color:#161616;">98</span>
<span class="t" style="left:453.30px;top:456.85px;font-size:13px;line-height:13px;color:#161616;">53</span>
<span class="t" style="left:527.50px;top:456.85px;font-size:13px;line-height:13px;color:#161616;">KU/</span>
<span class="t" style="left:557.00px;top:456.85px;font-size:13px;line-height:13px;color:#161616;transform:scaleX(1.027);transform-origin:0 0;">/2002213607</span>
<span class="t" style="left:645.80px;top:456.85px;font-size:13px;line-height:13px;color:#161616;transform:scaleX(0.873);transform-origin:0 0;">ORDERS04</span>
<span class="t" style="left:727.50px;top:456.85px;font-size:13px;line-height:13px;color:#161616;transform:scaleX(1.050);transform-origin:0 0;">07/21/2017</span>
<span class="t" style="left:809.00px;top:456.85px;font-size:13px;line-height:13px;color:#161616;transform:scaleX(1.024);transform-origin:0 0;">07:27:09</span>
<span class="t" style="left:934.00px;top:456.85px;font-size:13px;line-height:13px;color:#161616;transform:scaleX(0.841);transform-origin:0 0;">ORDERS</span>
<span class="t" style="left:993.30px;top:456.85px;font-size:13px;line-height:13px;color:#161616;transform:scaleX(1.022);transform-origin:0 0;">Inbox</span>
<span class="t" style="left:1052.50px;top:456.85px;font-size:13px;line-height:13px;color:#161616;transform:scaleX(0.872);transform-origin:0 0;">Z1ORDERS</span>
<span class="t" style="left:1134.20px;top:456.85px;font-size:13px;line-height:13px;color:#161616;transform:scaleX(0.894);transform-origin:0 0;">SA</span>
<span class="t" style="left:271.70px;top:476.95px;font-size:13px;line-height:13px;color:#161616;transform:scaleX(1.020);transform-origin:0 0;">0000002014634777</span>
<span class="t" style="left:426.33px;top:476.95px;font-size:13px;line-height:13px;color:#161616;">62</span>
<span class="t" style="left:453.30px;top:476.95px;font-size:13px;line-height:13px;color:#161616;">53</span>
<span class="t" style="left:527.50px;top:476.95px;font-size:13px;line-height:13px;color:#161616;">KU/</span>
<span class="t" style="left:557.00px;top:476.95px;font-size:13px;line-height:13px;color:#161616;transform:scaleX(1.027);transform-origin:0 0;">/2002213607</span>
<span class="t" style="left:645.80px;top:476.95px;font-size:13px;line-height:13px;color:#161616;transform:scaleX(0.873);transform-origin:0 0;">ORDERS04</span>
<span class="t" style="left:727.50px;top:476.95px;font-size:13px;line-height:13px;color:#161616;transform:scaleX(1.050);transform-origin:0 0;">07/21/2017</span>
<span class="t" style="left:809.00px;top:476.95px;font-size:13px;line-height:13px;color:#161616;transform:scaleX(1.024);transform-origin:0 0;">07:27:09</span>
<span class="t" style="left:934.00px;top:476.95px;font-size:13px;line-height:13px;color:#161616;transform:scaleX(0.841);transform-origin:0 0;">ORDERS</span>
<span class="t" style="left:993.30px;top:476.95px;font-size:13px;line-height:13px;color:#161616;transform:scaleX(1.022);transform-origin:0 0;">Inbox</span>
<span class="t" style="left:1052.50px;top:476.95px;font-size:13px;line-height:13px;color:#161616;transform:scaleX(0.872);transform-origin:0 0;">Z1ORDERS</span>
<span class="t" style="left:1134.20px;top:476.95px;font-size:13px;line-height:13px;color:#161616;transform:scaleX(0.894);transform-origin:0 0;">SA</span>
<span class="t" style="left:271.70px;top:497.05px;font-size:13px;line-height:13px;color:#161616;transform:scaleX(1.020);transform-origin:0 0;">0000002014634778</span>
<span class="t" style="left:426.33px;top:497.05px;font-size:13px;line-height:13px;color:#161616;">66</span>
<span class="t" style="left:453.30px;top:497.05px;font-size:13px;line-height:13px;color:#161616;">53</span>
<span class="t" style="left:527.50px;top:497.05px;font-size:13px;line-height:13px;color:#161616;">KU/</span>
<span class="t" style="left:557.00px;top:497.05px;font-size:13px;line-height:13px;color:#161616;transform:scaleX(1.027);transform-origin:0 0;">/2002213607</span>
<span class="t" style="left:645.80px;top:497.05px;font-size:13px;line-height:13px;color:#161616;transform:scaleX(0.873);transform-origin:0 0;">ORDERS04</span>
<span class="t" style="left:727.50px;top:497.05px;font-size:13px;line-height:13px;color:#161616;transform:scaleX(1.050);transform-origin:0 0;">07/21/2017</span>
<span class="t" style="left:809.00px;top:497.05px;font-size:13px;line-height:13px;color:#161616;transform:scaleX(1.024);transform-origin:0 0;">07:27:09</span>
<span class="t" style="left:934.00px;top:497.05px;font-size:13px;line-height:13px;color:#161616;transform:scaleX(0.841);transform-origin:0 0;">ORDERS</span>
<span class="t" style="left:993.30px;top:497.05px;font-size:13px;line-height:13px;color:#161616;transform:scaleX(1.022);transform-origin:0 0;">Inbox</span>
<span class="t" style="left:1052.50px;top:497.05px;font-size:13px;line-height:13px;color:#161616;transform:scaleX(0.872);transform-origin:0 0;">Z1ORDERS</span>
<span class="t" style="left:1134.20px;top:497.05px;font-size:13px;line-height:13px;color:#161616;transform:scaleX(0.894);transform-origin:0 0;">SA</span>
<span class="t" style="left:271.70px;top:517.15px;font-size:13px;line-height:13px;color:#161616;transform:scaleX(1.020);transform-origin:0 0;">0000002014634779</span>
<span class="t" style="left:426.33px;top:517.15px;font-size:13px;line-height:13px;color:#161616;">94</span>
<span class="t" style="left:453.30px;top:517.15px;font-size:13px;line-height:13px;color:#161616;">53</span>
<span class="t" style="left:527.50px;top:517.15px;font-size:13px;line-height:13px;color:#161616;">KU/</span>
<span class="t" style="left:557.00px;top:517.15px;font-size:13px;line-height:13px;color:#161616;transform:scaleX(1.027);transform-origin:0 0;">/2002213607</span>
<span class="t" style="left:645.80px;top:517.15px;font-size:13px;line-height:13px;color:#161616;transform:scaleX(0.873);transform-origin:0 0;">ORDERS04</span>
<span class="t" style="left:727.50px;top:517.15px;font-size:13px;line-height:13px;color:#161616;transform:scaleX(1.050);transform-origin:0 0;">07/21/2017</span>
<span class="t" style="left:809.00px;top:517.15px;font-size:13px;line-height:13px;color:#161616;transform:scaleX(1.024);transform-origin:0 0;">07:27:09</span>
<span class="t" style="left:934.00px;top:517.15px;font-size:13px;line-height:13px;color:#161616;transform:scaleX(0.841);transform-origin:0 0;">ORDERS</span>
<span class="t" style="left:993.30px;top:517.15px;font-size:13px;line-height:13px;color:#161616;transform:scaleX(1.022);transform-origin:0 0;">Inbox</span>
<span class="t" style="left:1052.50px;top:517.15px;font-size:13px;line-height:13px;color:#161616;transform:scaleX(0.872);transform-origin:0 0;">Z1ORDERS</span>
<span class="t" style="left:1134.20px;top:517.15px;font-size:13px;line-height:13px;color:#161616;transform:scaleX(0.894);transform-origin:0 0;">SA</span>
<span class="t" style="left:271.70px;top:537.25px;font-size:13px;line-height:13px;color:#161616;transform:scaleX(1.020);transform-origin:0 0;">0000002014634780</span>
<span class="t" style="left:419.10px;top:537.25px;font-size:13px;line-height:13px;color:#161616;">102</span>
<span class="t" style="left:453.30px;top:537.25px;font-size:13px;line-height:13px;color:#161616;">53</span>
<span class="t" style="left:527.50px;top:537.25px;font-size:13px;line-height:13px;color:#161616;">KU/</span>
<span class="t" style="left:557.00px;top:537.25px;font-size:13px;line-height:13px;color:#161616;transform:scaleX(1.027);transform-origin:0 0;">/2002213607</span>
<span class="t" style="left:645.80px;top:537.25px;font-size:13px;line-height:13px;color:#161616;transform:scaleX(0.873);transform-origin:0 0;">ORDERS04</span>
<span class="t" style="left:727.50px;top:537.25px;font-size:13px;line-height:13px;color:#161616;transform:scaleX(1.050);transform-origin:0 0;">07/21/2017</span>
<span class="t" style="left:809.00px;top:537.25px;font-size:13px;line-height:13px;color:#161616;transform:scaleX(1.024);transform-origin:0 0;">07:27:09</span>
<span class="t" style="left:934.00px;top:537.25px;font-size:13px;line-height:13px;color:#161616;transform:scaleX(0.841);transform-origin:0 0;">ORDERS</span>
<span class="t" style="left:993.30px;top:537.25px;font-size:13px;line-height:13px;color:#161616;transform:scaleX(1.022);transform-origin:0 0;">Inbox</span>
<span class="t" style="left:1052.50px;top:537.25px;font-size:13px;line-height:13px;color:#161616;transform:scaleX(0.872);transform-origin:0 0;">Z1ORDERS</span>
<span class="t" style="left:1134.20px;top:537.25px;font-size:13px;line-height:13px;color:#161616;transform:scaleX(0.894);transform-origin:0 0;">SA</span>
<span class="t" style="left:271.70px;top:557.35px;font-size:13px;line-height:13px;color:#161616;transform:scaleX(1.020);transform-origin:0 0;">0000002014634781</span>
<span class="t" style="left:426.33px;top:557.35px;font-size:13px;line-height:13px;color:#161616;">82</span>
<span class="t" style="left:453.30px;top:557.35px;font-size:13px;line-height:13px;color:#161616;">53</span>
<span class="t" style="left:527.50px;top:557.35px;font-size:13px;line-height:13px;color:#161616;">KU/</span>
<span class="t" style="left:557.00px;top:557.35px;font-size:13px;line-height:13px;color:#161616;transform:scaleX(1.027);transform-origin:0 0;">/2002213607</span>
<span class="t" style="left:645.80px;top:557.35px;font-size:13px;line-height:13px;color:#161616;transform:scaleX(0.873);transform-origin:0 0;">ORDERS04</span>
<span class="t" style="left:727.50px;top:557.35px;font-size:13px;line-height:13px;color:#161616;transform:scaleX(1.050);transform-origin:0 0;">07/21/2017</span>
<span class="t" style="left:809.00px;top:557.35px;font-size:13px;line-height:13px;color:#161616;transform:scaleX(1.024);transform-origin:0 0;">07:27:09</span>
<span class="t" style="left:934.00px;top:557.35px;font-size:13px;line-height:13px;color:#161616;transform:scaleX(0.841);transform-origin:0 0;">ORDERS</span>
<span class="t" style="left:993.30px;top:557.35px;font-size:13px;line-height:13px;color:#161616;transform:scaleX(1.022);transform-origin:0 0;">Inbox</span>
<span class="t" style="left:1052.50px;top:557.35px;font-size:13px;line-height:13px;color:#161616;transform:scaleX(0.872);transform-origin:0 0;">Z1ORDERS</span>
<span class="t" style="left:1134.20px;top:557.35px;font-size:13px;line-height:13px;color:#161616;transform:scaleX(0.894);transform-origin:0 0;">SA</span>
<span class="t" style="left:271.70px;top:577.45px;font-size:13px;line-height:13px;color:#161616;transform:scaleX(1.020);transform-origin:0 0;">0000002014634782</span>
<span class="t" style="left:426.33px;top:577.45px;font-size:13px;line-height:13px;color:#161616;">61</span>
<span class="t" style="left:453.30px;top:577.45px;font-size:13px;line-height:13px;color:#161616;">53</span>
<span class="t" style="left:527.50px;top:577.45px;font-size:13px;line-height:13px;color:#161616;">KU/</span>
<span class="t" style="left:557.00px;top:577.45px;font-size:13px;line-height:13px;color:#161616;transform:scaleX(1.027);transform-origin:0 0;">/2002213607</span>
<span class="t" style="left:645.80px;top:577.45px;font-size:13px;line-height:13px;color:#161616;transform:scaleX(0.873);transform-origin:0 0;">ORDERS04</span>
<span class="t" style="left:727.50px;top:577.45px;font-size:13px;line-height:13px;color:#161616;transform:scaleX(1.050);transform-origin:0 0;">07/21/2017</span>
<span class="t" style="left:809.00px;top:577.45px;font-size:13px;line-height:13px;color:#161616;transform:scaleX(1.024);transform-origin:0 0;">07:27:09</span>
<span class="t" style="left:934.00px;top:577.45px;font-size:13px;line-height:13px;color:#161616;transform:scaleX(0.841);transform-origin:0 0;">ORDERS</span>
<span class="t" style="left:993.30px;top:577.45px;font-size:13px;line-height:13px;color:#161616;transform:scaleX(1.022);transform-origin:0 0;">Inbox</span>
<span class="t" style="left:1052.50px;top:577.45px;font-size:13px;line-height:13px;color:#161616;transform:scaleX(0.872);transform-origin:0 0;">Z1ORDERS</span>
<span class="t" style="left:1134.20px;top:577.45px;font-size:13px;line-height:13px;color:#161616;transform:scaleX(0.894);transform-origin:0 0;">SA</span>
<span class="t" style="left:271.70px;top:597.55px;font-size:13px;line-height:13px;color:#161616;transform:scaleX(1.020);transform-origin:0 0;">0000002014634783</span>
<span class="t" style="left:426.33px;top:597.55px;font-size:13px;line-height:13px;color:#161616;">78</span>
<span class="t" style="left:453.30px;top:597.55px;font-size:13px;line-height:13px;color:#161616;">53</span>
<span class="t" style="left:527.50px;top:597.55px;font-size:13px;line-height:13px;color:#161616;">KU/</span>
<span class="t" style="left:557.00px;top:597.55px;font-size:13px;line-height:13px;color:#161616;transform:scaleX(1.027);transform-origin:0 0;">/2002213607</span>
<span class="t" style="left:645.80px;top:597.55px;font-size:13px;line-height:13px;color:#161616;transform:scaleX(0.873);transform-origin:0 0;">ORDERS04</span>
<span class="t" style="left:727.50px;top:597.55px;font-size:13px;line-height:13px;color:#161616;transform:scaleX(1.050);transform-origin:0 0;">07/21/2017</span>
<span class="t" style="left:809.00px;top:597.55px;font-size:13px;line-height:13px;color:#161616;transform:scaleX(1.024);transform-origin:0 0;">07:27:09</span>
<span class="t" style="left:934.00px;top:597.55px;font-size:13px;line-height:13px;color:#161616;transform:scaleX(0.841);transform-origin:0 0;">ORDERS</span>
<span class="t" style="left:993.30px;top:597.55px;font-size:13px;line-height:13px;color:#161616;transform:scaleX(1.022);transform-origin:0 0;">Inbox</span>
<span class="t" style="left:1052.50px;top:597.55px;font-size:13px;line-height:13px;color:#161616;transform:scaleX(0.872);transform-origin:0 0;">Z1ORDERS</span>
<span class="t" style="left:1134.20px;top:597.55px;font-size:13px;line-height:13px;color:#161616;transform:scaleX(0.894);transform-origin:0 0;">SA</span>
<span class="t" style="left:271.70px;top:617.65px;font-size:13px;line-height:13px;color:#161616;transform:scaleX(1.020);transform-origin:0 0;">0000002014634784</span>
<span class="t" style="left:426.33px;top:617.65px;font-size:13px;line-height:13px;color:#161616;">57</span>
<span class="t" style="left:453.30px;top:617.65px;font-size:13px;line-height:13px;color:#161616;">53</span>
<span class="t" style="left:527.50px;top:617.65px;font-size:13px;line-height:13px;color:#161616;">KU/</span>
<span class="t" style="left:557.00px;top:617.65px;font-size:13px;line-height:13px;color:#161616;transform:scaleX(1.027);transform-origin:0 0;">/2002213607</span>
<span class="t" style="left:645.80px;top:617.65px;font-size:13px;line-height:13px;color:#161616;transform:scaleX(0.873);transform-origin:0 0;">ORDERS04</span>
<span class="t" style="left:727.50px;top:617.65px;font-size:13px;line-height:13px;color:#161616;transform:scaleX(1.050);transform-origin:0 0;">07/21/2017</span>
<span class="t" style="left:809.00px;top:617.65px;font-size:13px;line-height:13px;color:#161616;transform:scaleX(1.024);transform-origin:0 0;">07:27:09</span>
<span class="t" style="left:934.00px;top:617.65px;font-size:13px;line-height:13px;color:#161616;transform:scaleX(0.841);transform-origin:0 0;">ORDERS</span>
<span class="t" style="left:993.30px;top:617.65px;font-size:13px;line-height:13px;color:#161616;transform:scaleX(1.022);transform-origin:0 0;">Inbox</span>
<span class="t" style="left:1052.50px;top:617.65px;font-size:13px;line-height:13px;color:#161616;transform:scaleX(0.872);transform-origin:0 0;">Z1ORDERS</span>
<span class="t" style="left:1134.20px;top:617.65px;font-size:13px;line-height:13px;color:#161616;transform:scaleX(0.894);transform-origin:0 0;">SA</span>
<span class="t" style="left:271.70px;top:637.75px;font-size:13px;line-height:13px;color:#161616;transform:scaleX(1.020);transform-origin:0 0;">0000002014634785</span>
<span class="t" style="left:426.33px;top:637.75px;font-size:13px;line-height:13px;color:#161616;">90</span>
<span class="t" style="left:453.30px;top:637.75px;font-size:13px;line-height:13px;color:#161616;">53</span>
<span class="t" style="left:527.50px;top:637.75px;font-size:13px;line-height:13px;color:#161616;">KU/</span>
<span class="t" style="left:557.00px;top:637.75px;font-size:13px;line-height:13px;color:#161616;transform:scaleX(1.027);transform-origin:0 0;">/2002213607</span>
<span class="t" style="left:645.80px;top:637.75px;font-size:13px;line-height:13px;color:#161616;transform:scaleX(0.873);transform-origin:0 0;">ORDERS04</span>
<span class="t" style="left:727.50px;top:637.75px;font-size:13px;line-height:13px;color:#161616;transform:scaleX(1.050);transform-origin:0 0;">07/21/2017</span>
<span class="t" style="left:809.00px;top:637.75px;font-size:13px;line-height:13px;color:#161616;transform:scaleX(1.024);transform-origin:0 0;">07:27:09</span>
<span class="t" style="left:934.00px;top:637.75px;font-size:13px;line-height:13px;color:#161616;transform:scaleX(0.841);transform-origin:0 0;">ORDERS</span>
<span class="t" style="left:993.30px;top:637.75px;font-size:13px;line-height:13px;color:#161616;transform:scaleX(1.022);transform-origin:0 0;">Inbox</span>
<span class="t" style="left:1052.50px;top:637.75px;font-size:13px;line-height:13px;color:#161616;transform:scaleX(0.872);transform-origin:0 0;">Z1ORDERS</span>
<span class="t" style="left:1134.20px;top:637.75px;font-size:13px;line-height:13px;color:#161616;transform:scaleX(0.894);transform-origin:0 0;">SA</span>
<div style="left:1147.5px;top:254px;width:3.5px;height:402px;background:#c9d8e7;"></div>
<div style="left:1150.5px;top:254px;width:17.5px;height:402px;background:#f7f9fb;"></div>
<div style="left:264px;top:656px;width:907px;height:3px;background:#c6d6e5;"></div>
<div style="left:397.5px;top:659.5px;width:36px;height:19px;background:#f5f7fa;"></div>
<div style="left:436.5px;top:661px;width:500px;height:16px;background:linear-gradient(#eef2f6,#dfe6ed);border:1px solid #a9b5c1;border-radius:2px;"></div>
<div style="left:937px;top:659.5px;width:172px;height:19px;background:#f9fafc;"></div>
<div style="left:1109.5px;top:659.5px;width:37px;height:19px;background:#f5f7fa;"></div>
<div style="left:415px;top:660px;width:1px;height:18px;background:#dfe5eb;"></div>
<div style="left:1127.5px;top:660px;width:1px;height:18px;background:#dfe5eb;"></div>
<div style="left:1151px;top:272px;width:17px;height:1px;background:#dfe5eb;"></div>
<div style="left:1151px;top:290.5px;width:17px;height:1px;background:#dfe5eb;"></div>
<div style="left:1151px;top:619px;width:17px;height:1px;background:#dfe5eb;"></div>
<div style="left:1151px;top:637.5px;width:17px;height:1px;background:#dfe5eb;"></div>
<span class="t" style="left:265.50px;top:686.95px;font-size:13px;line-height:13px;color:#161616;">Status Message for Selected IDoc</span>
<span class="t" style="left:265.50px;top:709.95px;font-size:13px;line-height:13px;color:#161616;">Status Text:</span>
<span class="t" style="left:265.50px;top:732.95px;font-size:13px;line-height:13px;color:#161616;">T100 Text:</span>
<div style="left:263px;top:725.3px;width:111px;height:1.3px;background:#b8c0c8;"></div>
<div style="left:263px;top:748.6px;width:111px;height:1.3px;background:#b8c0c8;"></div>
<div style="left:374px;top:705.3px;width:746px;height:21px;background:#dce7f1;border:1.5px solid #9aa0a7;"></div>
<div style="left:374px;top:728.6px;width:746px;height:21px;background:#dce7f1;border:1.5px solid #9aa0a7;"></div>
<svg width="1200" height="888" style="left:0;top:0;position:absolute"><defs>
<radialGradient id="gG" cx="35%" cy="30%" r="70%"><stop offset="0" stop-color="#8cf57a"/><stop offset="0.35" stop-color="#23b81f"/><stop offset="1" stop-color="#0b4d12"/></radialGradient>
<radialGradient id="gY" cx="35%" cy="30%" r="70%"><stop offset="0" stop-color="#ffffb0"/><stop offset="0.4" stop-color="#f8e21a"/><stop offset="1" stop-color="#e07a00"/></radialGradient>
<radialGradient id="gR" cx="35%" cy="30%" r="70%"><stop offset="0" stop-color="#ff9a9a"/><stop offset="0.35" stop-color="#e81818"/><stop offset="1" stop-color="#7a0000"/></radialGradient>
<linearGradient id="gBtn" x1="0" y1="0" x2="0" y2="1"><stop offset="0" stop-color="#fffbe4"/><stop offset="0.25" stop-color="#fcf0c0"/><stop offset="1" stop-color="#f4dc98"/></linearGradient>
<linearGradient id="gSAP" x1="0" y1="0" x2="0" y2="1"><stop offset="0" stop-color="#2aa8ee"/><stop offset="1" stop-color="#0746c2"/></linearGradient>
</defs><g fill="none" stroke="#1f2d5c" stroke-width="1.3"><path d="M35.5 30.6 V29.6 H24.8 V39.8 H35.5 V38.8"/><path d="M29.8 32.6 H39.2 L35.6 36.3 H29.8 Z"/></g><rect x="53" y="41.6" width="4" height="1" fill="#6c7890"/><rect x="144.5" y="41.6" width="6.5" height="1" fill="#6c7890"/><rect x="189" y="41.6" width="7.5" height="1" fill="#6c7890"/><rect x="246.8" y="41.6" width="5.799999999999983" height="1" fill="#6c7890"/><rect x="303.5" y="41.6" width="7.0" height="1" fill="#6c7890"/><circle cx="44.2" cy="65.8" r="7.4" fill="url(#gG)" stroke="#0a160a" stroke-width="1.2"/><path d="M40.3 65.6 L43.2 69.6 L51.2 61.8" stroke="#101010" stroke-width="3.6" fill="none" stroke-linejoin="round"/><path d="M40.3 65.6 L43.2 69.6 L51.2 61.8" stroke="#fff" stroke-width="1.8" fill="none"/><rect x="66.5" y="56.5" width="149.5" height="22.5" fill="#fff" stroke="#a9a9a9" stroke-width="1.6"/><g stroke="#e8232a" stroke-width="1.6" fill="none"><path d="M69 54.8 H64.8 V60.5"/><path d="M69 81.2 H64.8 V75.3"/><path d="M212.5 54.8 H218.3 V60.5"/><path d="M212.5 81.2 H218.3 V75.3"/></g><rect x="72.5" y="60" width="1.3" height="14" fill="#111"/><path d="M200.2 64.6 H209.2 L204.7 69.6 Z" fill="#1e3776"/><path d="M227.6 67 L236.2 60.4 V73.6 Z" fill="#dcdcdc" stroke="#111" stroke-width="1.5" stroke-linejoin="round"/><g stroke="#9c9fcb" stroke-width="1.2"><rect x="248.6" y="58.6" width="14.8" height="14.8" rx="1.5" fill="#d3d5ee"/><rect x="251.5" y="58.8" width="9" height="6" fill="#bfc1e4"/><rect x="251.5" y="67.6" width="9" height="5.6" fill="#f4f4fb"/></g><rect x="273.09999999999997" y="60" width="1.3" height="13.5" fill="#b4c5da"/><rect x="355.79999999999995" y="60" width="1.3" height="13.5" fill="#b4c5da"/><rect x="438.59999999999997" y="60" width="1.3" height="13.5" fill="#b4c5da"/><rect x="543.8" y="60" width="1.3" height="13.5" fill="#b4c5da"/><rect x="603.1999999999999" y="60" width="1.3" height="13.5" fill="#b4c5da"/><circle cx="291" cy="66" r="7.4" fill="url(#gG)" stroke="#0b220b" stroke-width="1"/><path d="M285.2 66 L290.6 61.2 V63.9 H299.6 V68.1 H290.6 V70.8 Z" fill="#fff" stroke="#111" stroke-width="1"/><circle cx="315.5" cy="66" r="7.4" fill="url(#gY)" stroke="#343474" stroke-width="1"/><path d="M315.5 61 L320.3 66 H317.6 V70 H320 V73.2 H311 V70 H313.4 V66 H310.7 Z" fill="#fff" stroke="#111" stroke-width="0.9"/><circle cx="339" cy="66" r="7.4" fill="url(#gR)" stroke="#2a0a0a" stroke-width="1"/><circle cx="337.2" cy="61.5" r="1.3" fill="#fff"/><path d="M337.2 66.6 L345.6 74.2 M345.6 66.6 L337.2 74.2" stroke="#111" stroke-width="3"/><path d="M337.2 66.6 L345.6 74.2 M345.6 66.6 L337.2 74.2" stroke="#fff" stroke-width="1.4"/><g stroke="#9597c6" stroke-width="1.2"><path d="M368.6 58.6 H378.2 L380.4 60.8 V69 H368.6 Z" fill="#f3f3fb"/><rect x="366.6" y="68.6" width="15" height="5" rx="1" fill="#d9daf0"/></g><g stroke="#9597c6" stroke-width="1.2" fill="#d9daf0"><path d="M390.6 62 V73.4 H396.4 V68.6 H399.6 V73.4 H405.4 V62 L403.8 59 V58.6 H400 V62 H396 V58.6 H392.2 L390.6 62 Z"/></g><g stroke="#9597c6" stroke-width="1.2" fill="#d9daf0"><path d="M413.1 62 V73.4 H418.9 V68.6 H422.1 V73.4 H427.9 V62 L426.3 59 V58.6 H422.5 V62 H418.5 V58.6 H414.7 L413.1 62 Z"/></g><path d="M423.0 70.5 H428.5 M425.7 67.8 V73.2" stroke="#fff" stroke-width="3.2"/><path d="M423.0 70.5 H428.5 M425.7 67.8 V73.2" stroke="#9597c6" stroke-width="1.2"/><path d="M453.6 59.6 H461 L464.4 63 V73 H453.6 Z" fill="#e6e6f6" stroke="#7d80b6" stroke-width="1.2"/><path d="M460.6 59.6 V63.4 H464.4" fill="#fff" stroke="#7d80b6" stroke-width="1"/><path d="M453.2 59.6 L457.0 63.2 H454.7 V66.2 H451.7 V63.2 H449.4 Z" fill="#c4c6ec" stroke="#7d80b6" stroke-width="1"/><path d="M453.2 66.6 L457.0 70.19999999999999 H454.7 V73.19999999999999 H451.7 V70.19999999999999 H449.4 Z" fill="#c4c6ec" stroke="#7d80b6" stroke-width="1"/><path d="M476.1 59.6 H483.5 L486.9 63 V73 H476.1 Z" fill="#e6e6f6" stroke="#7d80b6" stroke-width="1.2"/><path d="M483.1 59.6 V63.4 H486.9" fill="#fff" stroke="#7d80b6" stroke-width="1"/><path d="M475.7 59.2 L479.5 62.800000000000004 H477.2 V65.8 H474.2 V62.800000000000004 H471.9 Z" fill="#c4c6ec" stroke="#7d80b6" stroke-width="1"/><path d="M499.6 59.6 H507 L510.4 63 V73 H499.6 Z" fill="#e6e6f6" stroke="#7d80b6" stroke-width="1.2"/><path d="M506.6 59.6 V63.4 H510.4" fill="#fff" stroke="#7d80b6" stroke-width="1"/><path d="M499.2 73.6 L503.0 70.0 H500.7 V67.0 H497.7 V70.0 H495.4 Z" fill="#c4c6ec" stroke="#7d80b6" stroke-width="1"/><path d="M523.1 59.6 H530.5 L533.9 63 V73 H523.1 Z" fill="#e6e6f6" stroke="#7d80b6" stroke-width="1.2"/><path d="M530.1 59.6 V63.4 H533.9" fill="#fff" stroke="#7d80b6" stroke-width="1"/><path d="M522.7 66.2 L526.5 62.6 H524.2 V59.6 H521.2 V62.6 H518.9000000000001 Z" fill="#c4c6ec" stroke="#7d80b6" stroke-width="1"/><path d="M522.7 73.2 L526.5 69.60000000000001 H524.2 V66.60000000000001 H521.2 V69.60000000000001 H518.9000000000001 Z" fill="#c4c6ec" stroke="#7d80b6" stroke-width="1"/><rect x="554.6" y="59.2" width="15.4" height="15" fill="#fff" stroke="#111" stroke-width="1.3"/><rect x="555.3" y="59.9" width="14" height="2.8" fill="#2a56c8"/><g stroke="#333" stroke-width="2.4" opacity="0.6"><path d="M562.3 64 V72.8 M557.6 68.4 H567 M559 65.1 L565.6 71.7 M565.6 65.1 L559 71.7"/></g><g stroke="#f4ec00" stroke-width="1.3"><path d="M562.3 64 V72.8 M557.6 68.4 H567 M559 65.1 L565.6 71.7 M565.6 65.1 L559 71.7"/></g><rect x="577.8" y="59.2" width="15.4" height="15" fill="#fff" stroke="#111" stroke-width="1.3"/><rect x="578.5" y="59.9" width="14" height="2.8" fill="#2a56c8"/><path d="M579.5 72.8 L586 66.3 L584.2 64.5 H590.4 V70.7 L588.6 68.9 L582.1 75.4 Z" fill="#f2e600" stroke="#111" stroke-width="1"/><path d="M588 67 V72.6 H582.8" stroke="#c9c9c9" stroke-width="1" fill="none"/><circle cx="621.4" cy="66.4" r="7.8" fill="url(#gY)" stroke="#2b2b6b" stroke-width="1"/><path d="M618 64.2 Q618 60.6 621.6 60.6 Q625.2 60.6 625.2 63.8 Q625.2 66 622.8 66.8 V68.8 H620.2 V65.6 Q622.4 65.2 622.4 63.9 Q622.4 62.9 621.5 62.9 Q620.6 62.9 620.6 64.2 Z" fill="#fff" stroke="#111" stroke-width="0.9"/><rect x="620" y="70" width="3" height="2.6" fill="#fff" stroke="#111" stroke-width="0.9"/><rect x="636.6" y="58.8" width="15" height="12.4" rx="1" fill="#dcdcdc" stroke="#111" stroke-width="1.2"/><rect x="638.6" y="60.6" width="3.8" height="8.6" fill="#10c040"/><rect x="642.4" y="60.6" width="3.8" height="8.6" fill="#e01818"/><rect x="646.2" y="60.6" width="3.6" height="8.6" fill="#1a3ad8"/><rect x="637" y="71.2" width="13" height="2.4" fill="#bdbdbd" stroke="#111" stroke-width="1"/><rect x="645.4" y="66.2" width="7.6" height="8.6" fill="#ffffff" stroke="#111" stroke-width="1.1"/><rect x="646.9" y="68" width="4.6" height="0.9" fill="#111"/><rect x="646.9" y="70.1" width="4.6" height="0.9" fill="#111"/><rect x="646.9" y="72.2" width="4.6" height="0.9" fill="#111"/><path d="M40.6 135.2 H51 L53.4 137.6 V149.6 H40.6 Z" fill="#fff" stroke="#111" stroke-width="1.3"/><g fill="none" stroke-linecap="butt"><path d="M38.8 143 A4.8 4.8 0 0 1 47.2 139.6" stroke="#08146a" stroke-width="3.8"/><path d="M48.4 143.4 A4.8 4.8 0 0 1 40 146.8" stroke="#08146a" stroke-width="3.8"/><path d="M38.8 143 A4.8 4.8 0 0 1 47.2 139.6" stroke="#1a36c8" stroke-width="2.2"/><path d="M48.4 143.4 A4.8 4.8 0 0 1 40 146.8" stroke="#1a36c8" stroke-width="2.2"/></g><path d="M44.6 141.6 L50.2 141.8 L49.6 136.6 Z" fill="#1a36c8" stroke="#08146a" stroke-width="0.9"/><path d="M42.6 144.8 L37 144.6 L37.6 149.8 Z" fill="#1a36c8" stroke="#08146a" stroke-width="0.9"/><rect x="65.6" y="138.2" width="13" height="10.6" fill="#fff" stroke="#9a9a9a" stroke-width="1.2"/><rect x="66.4" y="139" width="11.4" height="1.6" fill="#6d8cc8"/><rect x="68.6" y="141.2" width="7.6" height="6" fill="#e8eefa" stroke="#6d8cc8" stroke-width="0.8"/><path d="M72.4 142.4 V146.6 M70.3 144.5 H74.5" stroke="#1830a8" stroke-width="1.3"/><path d="M62.4 135 L67.2 139.2 L62.4 143.4 Z" fill="#f5a21a" stroke="#222" stroke-width="0.9"/><rect x="90.6" y="138.2" width="13" height="10.6" fill="#fff" stroke="#9a9a9a" stroke-width="1.2"/><rect x="91.4" y="139" width="11.4" height="1.6" fill="#6d8cc8"/><rect x="93.6" y="141.2" width="7.6" height="6" fill="#e8eefa" stroke="#6d8cc8" stroke-width="0.8"/><path d="M95.3 144.5 H99.5" stroke="#1830a8" stroke-width="1.3"/><path d="M88.2 135.4 H96.4 L92.3 139.6 Z" fill="#f5a21a" stroke="#222" stroke-width="0.9"/><path d="M113.6 140.6 L116.6 143.8 L122.6 136" stroke="#111" stroke-width="3" fill="none"/><path d="M113.6 140.6 L116.6 143.8 L122.6 136" stroke="#2ad62a" stroke-width="1.5" fill="none"/><path d="M121 141.6 L128.2 148.8 M128.2 141.6 L121 148.8" stroke="#7a1010" stroke-width="2.6"/><path d="M121 141.6 L128.2 148.8 M128.2 141.6 L121 148.8" stroke="#ee3030" stroke-width="1.4"/><path d="M139.8 135.2 H150 L152.6 137.8 V148.6 H139.8 Z" fill="#fff" stroke="#111" stroke-width="1.4"/><path d="M139.8 138.4 H152.4 M139.8 141.4 H152.4 M139.8 144.6 H152.4 M142.6 135.2 V148.6" stroke="#222" stroke-width="0.9"/><rect x="143" y="135.8" width="9" height="2.4" fill="#e0e0e0"/><rect x="164.8" y="136" width="1.3" height="13.5" fill="#aebfd2"/><path d="M180.6 138 V135.6 A2.2 2.2 0 0 1 185 135.6 V138" stroke="#111" stroke-width="1.2" fill="none"/><rect x="174.6" y="140.6" width="9" height="3.6" fill="#9a9ad8" stroke="#111" stroke-width="1.2"/><rect x="177.6" y="143" width="13" height="6.6" fill="#fff" stroke="#111" stroke-width="1.2"/><path d="M177.6 146.2 H190.6 M181.8 143 V149.6 M186.2 143 V149.6" stroke="#111" stroke-width="1"/><rect x="182.6" y="139.6" width="8" height="3.4" fill="#fff" stroke="#111" stroke-width="1.1"/><path d="M200.8 142.4 L206.6 137.4 V140.4 H217 V144.6 H206.6 V147.6 Z" fill="#28e628" stroke="#111" stroke-width="1.1" stroke-linejoin="round"/><path d="M38.2 193.6 H45.400000000000006 L41.800000000000004 197.56 Z" fill="#111"/><path d="M57.0 192.2 L58.0 190.2 H61.6 L62.599999999999994 192.2 H68.8 V202.0 H57.0 Z" fill="#ffef9a" stroke="#111" stroke-width="1.2" stroke-linejoin="round"/><path d="M55.0 194.6 H66.6 L67.4 195.6 V202.0 H56.4 L55.0 196.6 Z" fill="#fff3b0" stroke="#111" stroke-width="1.2" stroke-linejoin="round"/><circle cx="62.6" cy="215.4" r="1.1" fill="#111"/><path d="M76.6 211.2 H77.6 L78.6 209.2 H82.2 L83.2 211.2 H90.4 V221.0 H76.6 Z" fill="#ffef9a" stroke="#111" stroke-width="1.2" stroke-linejoin="round"/><path d="M59.5 231.6 H66.7 L63.1 235.56 Z" fill="#111"/><path d="M78.0 230.2 L79.0 228.2 H82.60000000000001 L83.60000000000001 230.2 H89.80000000000001 V240.0 H78.0 Z" fill="#ffef9a" stroke="#111" stroke-width="1.2" stroke-linejoin="round"/><path d="M76.0 232.6 H87.60000000000001 L88.4 233.6 V240.0 H77.4 L76.0 234.6 Z" fill="#fff3b0" stroke="#111" stroke-width="1.2" stroke-linejoin="round"/><path d="M82.4 249.4 L86.6 253.2 L82.4 257 Z" fill="#111"/><path d="M97.8 249.2 H98.8 L99.8 247.2 H103.4 L104.4 249.2 H111.60000000000001 V259.0 H97.8 Z" fill="#ffef9a" stroke="#111" stroke-width="1.2" stroke-linejoin="round"/><rect x="265.75" y="174.1" width="24.100000000000023" height="19.8" rx="2.2" fill="url(#gBtn)" stroke="#77735f" stroke-width="1.5"/><rect x="301.95" y="174.1" width="23.100000000000023" height="19.8" rx="2.2" fill="url(#gBtn)" stroke="#77735f" stroke-width="1.5"/><rect x="329.35" y="174.1" width="23.099999999999966" height="19.8" rx="2.2" fill="url(#gBtn)" stroke="#77735f" stroke-width="1.5"/><rect x="357.05" y="174.1" width="22.399999999999977" height="19.8" rx="2.2" fill="url(#gBtn)" stroke="#77735f" stroke-width="1.5"/><rect x="384.85" y="174.1" width="22.399999999999977" height="19.8" rx="2.2" fill="url(#gBtn)" stroke="#a9a590" stroke-width="1.5"/><rect x="412.35" y="174.1" width="32.5" height="19.8" rx="2.2" fill="url(#gBtn)" stroke="#77735f" stroke-width="1.5"/><rect x="433.0" y="177" width="1" height="14" fill="#c8c4a8"/><path d="M438.1 190 H441.8 V186.2 Z" fill="#111"/><rect x="458.65" y="174.1" width="33.30000000000001" height="19.8" rx="2.2" fill="url(#gBtn)" stroke="#a9a590" stroke-width="1.5"/><rect x="479.6" y="177" width="1" height="14" fill="#c8c4a8"/><path d="M485.2 190 H488.9 V186.2 Z" fill="#a8a8c0"/><rect x="496.75" y="174.1" width="33.39999999999998" height="19.8" rx="2.2" fill="url(#gBtn)" stroke="#a9a590" stroke-width="1.5"/><rect x="517.8" y="177" width="1" height="14" fill="#c8c4a8"/><path d="M523.4 190 H527.1 V186.2 Z" fill="#a8a8c0"/><rect x="543.25" y="174.1" width="22.700000000000045" height="19.8" rx="2.2" fill="url(#gBtn)" stroke="#77735f" stroke-width="1.5"/><rect x="570.95" y="174.1" width="36.299999999999955" height="19.8" rx="2.2" fill="url(#gBtn)" stroke="#77735f" stroke-width="1.5"/><path d="M600.5 190 H604.2 V186.2 Z" fill="#111"/><rect x="611.95" y="174.1" width="36.299999999999955" height="19.8" rx="2.2" fill="url(#gBtn)" stroke="#77735f" stroke-width="1.5"/><path d="M641.5 190 H645.2 V186.2 Z" fill="#111"/><rect x="653.45" y="174.1" width="33.09999999999991" height="19.8" rx="2.2" fill="url(#gBtn)" stroke="#77735f" stroke-width="1.5"/><rect x="673.7" y="177" width="1" height="14" fill="#c8c4a8"/><path d="M679.8 190 H683.5 V186.2 Z" fill="#111"/><rect x="699.35" y="174.1" width="23.199999999999932" height="19.8" rx="2.2" fill="url(#gBtn)" stroke="#77735f" stroke-width="1.5"/><rect x="735.15" y="174.1" width="51.89999999999998" height="19.8" rx="2.2" fill="url(#gBtn)" stroke="#77735f" stroke-width="1.5"/><rect x="294.5" y="176.5" width="1.6" height="15" fill="#8e9aa6"/><rect x="296.1" y="176.5" width="1" height="15" fill="#eef3f8"/><rect x="450.9" y="176.5" width="1.6" height="15" fill="#8e9aa6"/><rect x="452.5" y="176.5" width="1" height="15" fill="#eef3f8"/><rect x="535.4000000000001" y="176.5" width="1.6" height="15" fill="#8e9aa6"/><rect x="537.0" y="176.5" width="1" height="15" fill="#eef3f8"/><rect x="692.1" y="176.5" width="1.6" height="15" fill="#8e9aa6"/><rect x="693.6999999999999" y="176.5" width="1" height="15" fill="#eef3f8"/><rect x="727.8000000000001" y="176.5" width="1.6" height="15" fill="#8e9aa6"/><rect x="729.4" y="176.5" width="1" height="15" fill="#eef3f8"/><rect x="272.6" y="177.6" width="14" height="13" fill="#dcdcdc" stroke="#777" stroke-width="0.8"/><rect x="273.6" y="179" width="12" height="4" fill="#2a7ae0"/><rect x="273.6" y="184" width="12" height="2" fill="#fff"/><circle cx="276.4" cy="182.4" r="5.2" fill="none" stroke="#111" stroke-width="1.5"/><path d="M280 186.2 L285 191.2" stroke="#111" stroke-width="2.6"/><path d="M280.6 186.8 L284.4 190.6" stroke="#9bc" stroke-width="0.8"/><g stroke="#111" stroke-width="1.2"><rect x="311.4" y="176.8" width="4" height="3.8" fill="#e8e4b0"/><rect x="309.2" y="180.6" width="8.6" height="3.8" fill="#2f6fd0"/><rect x="306.2" y="184.4" width="14.4" height="4.6" fill="#a8d45a"/></g><g stroke="#111" stroke-width="1.2"><rect x="333.6" y="176.8" width="14.4" height="4.6" fill="#a8d45a"/><rect x="336.6" y="181.4" width="8.6" height="3.8" fill="#2f6fd0"/><rect x="338.8" y="185.2" width="4" height="3.8" fill="#e8e4b0"/></g><path d="M361.6 180 V190.6 H366.6 V186.6 H369.6 V190.6 H374.6 V180 L373 177 H369.4 V180.4 H366.8 V177 H363.2 Z" fill="#a7a6d8" stroke="#111" stroke-width="1.4" stroke-linejoin="round"/><path d="M364.2 181 V188.6 M372 181 V188.6" stroke="#e8e8ff" stroke-width="1.2"/><path d="M389.6 180 V190.6 H394.6 V186.6 H397.6 V190.6 H402.6 V180 L401 177 H397.4 V180.4 H394.8 V177 H391.2 Z" fill="#dcdcd8" stroke="#a0a098" stroke-width="1.3" stroke-linejoin="round"/><path d="M398.6 187 H405.4 M402 183.6 V190.4" stroke="#fff" stroke-width="3.4"/><path d="M398.6 187 H405.4 M402 183.6 V190.4" stroke="#a0a098" stroke-width="1.2"/><path d="M418 177.6 H430 L425.4 183 V190.2 H422.6 V183 Z" fill="#7d98c0" stroke="#111" stroke-width="1.3" stroke-linejoin="round"/><path d="M425.4 185 H428 A1.6 1.6 0 0 1 428 188.2 H425.4" fill="#fff" stroke="#111" stroke-width="1"/><path d="M420 178.6 H428" stroke="#c8d8f0" stroke-width="1"/><path d="M463.6 176.8 H475.6 V180.2 H468.8 L472 183.8 L468.8 187.4 H475.6 V190.6 H463.6 V188 L467.6 183.8 L463.6 179.6 Z" fill="#c8e070" stroke="#8aa040" stroke-width="1.1" stroke-linejoin="round"/><path d="M485.6 190 H489.2 V186.4 Z" fill="#b8b8d8"/><path d="M500.6 190.6 L514.6 176.8" stroke="#8c8a60" stroke-width="1"/><path d="M500.4 176.8 H507.2 V179 H503.6 L505.4 181 L503.6 183 H507.2 V185.2 H500.4 V183.6 L502.6 181 L500.4 178.4 Z" fill="#f0f040" stroke="#8c8a40" stroke-width="0.9"/><path d="M507.6 182.8 H514.4 V185 H510.8 L512.6 187 L510.8 189 H514.4 V191.2 H507.6 V189.6 L509.8 187 L507.6 184.4 Z" fill="#e8a030" stroke="#8c6a20" stroke-width="0.9"/><path d="M523.8 190 H527.4 V186.4 Z" fill="#b8b8d8"/><path d="M548.6 177.4 H558 L560.8 180.2 V186.6 H548.6 Z" fill="#dfe8f2" stroke="#111" stroke-width="1.2"/><rect x="546.4" y="186.4" width="16.4" height="4.8" rx="1" fill="#506070" stroke="#111" stroke-width="1.2"/><rect x="547.4" y="186.8" width="14.4" height="1.4" fill="#fff"/><path d="M580 177.4 H587.8 L590 179.6 V187.6 H580 Z" fill="#fff" stroke="#111" stroke-width="1.1"/><path d="M582 180.6 H588 M582 182.6 H588 M582 184.6 H588" stroke="#777" stroke-width="0.8"/><path d="M578.4 181 A4.6 5 0 0 0 578.4 191 Z" fill="#2a6ae8" stroke="#111" stroke-width="1.1"/><path d="M578.4 181 A4.6 5 0 0 1 578.4 191" fill="#d8e4f8" stroke="#111" stroke-width="1.1"/><path d="M617 176.8 H624.4 L626 178.4 V188 H617 Z" fill="#e8eef8" stroke="#111" stroke-width="1.1"/><path d="M619 179.6 H622.6 M619 181.6 H622.6" stroke="#555" stroke-width="0.8"/><rect x="623" y="181.4" width="7.4" height="10" fill="#2aa62a" stroke="#111" stroke-width="1.1"/><path d="M620 183.4 H624.6 V181.6 L628.4 185 L624.6 188.4 V186.6 H620 Z" fill="#ffe000" stroke="#333" stroke-width="0.7"/><g fill="#e4e4e4" stroke="#888" stroke-width="0.8"><rect x="662" y="177.2" width="3.6" height="2.8"/><rect x="666" y="177.2" width="3.6" height="2.8"/><rect x="662" y="180.8" width="3.6" height="2.8"/><rect x="666" y="180.8" width="3.6" height="2.8"/><rect x="662" y="184.4" width="3.6" height="2.8"/><rect x="666" y="184.4" width="3.6" height="2.8"/><rect x="662" y="188" width="3.6" height="2.8"/><rect x="666" y="188" width="3.6" height="2.8"/></g><rect x="656.2" y="181.2" width="5" height="3.2" fill="#f4a400" stroke="#111" stroke-width="1"/><rect x="703.4" y="176.6" width="14.8" height="13.2" fill="#0a20e0" stroke="#111" stroke-width="1.2"/><path d="M708.6 178.4 H712 V180.6 H708.6 Z M707.6 181.8 H712 V186.8 H713.4 V188.4 H707.4 V186.8 H708.8 V183.4 H707.6 Z" fill="#fff"/><circle cx="741" cy="177.8" r="1.4" fill="#f0e000" stroke="#111" stroke-width="0.9"/><rect x="739.6" y="180.6" width="2.8" height="8.4" fill="#f0e000" stroke="#111" stroke-width="1"/><path d="M742.6 182.6 H748.2 L750.8 185.2 V191.4 H742.6 Z" fill="#fff" stroke="#111" stroke-width="1.1"/><circle cx="491" cy="262.40" r="4.6" fill="#d6d6d8" stroke="#111" stroke-width="1.3"/><circle cx="500.6" cy="262.40" r="4.6" fill="#d6d6d8" stroke="#111" stroke-width="1.3"/><rect x="506.2" y="257.70" width="9.2" height="9.4" rx="1.8" fill="#00e600" stroke="#111" stroke-width="1.3"/><circle cx="491" cy="282.50" r="4.6" fill="#d6d6d8" stroke="#111" stroke-width="1.3"/><circle cx="500.6" cy="282.50" r="4.6" fill="#d6d6d8" stroke="#111" stroke-width="1.3"/><rect x="506.2" y="277.80" width="9.2" height="9.4" rx="1.8" fill="#00e600" stroke="#111" stroke-width="1.3"/><circle cx="491" cy="302.60" r="4.6" fill="#d6d6d8" stroke="#111" stroke-width="1.3"/><circle cx="500.6" cy="302.60" r="4.6" fill="#d6d6d8" stroke="#111" stroke-width="1.3"/><rect x="506.2" y="297.90" width="9.2" height="9.4" rx="1.8" fill="#00e600" stroke="#111" stroke-width="1.3"/><circle cx="491" cy="322.70" r="4.6" fill="#d6d6d8" stroke="#111" stroke-width="1.3"/><circle cx="500.6" cy="322.70" r="4.6" fill="#d6d6d8" stroke="#111" stroke-width="1.3"/><rect x="506.2" y="318.00" width="9.2" height="9.4" rx="1.8" fill="#00e600" stroke="#111" stroke-width="1.3"/><circle cx="491" cy="342.80" r="4.6" fill="#d6d6d8" stroke="#111" stroke-width="1.3"/><circle cx="500.6" cy="342.80" r="4.6" fill="#d6d6d8" stroke="#111" stroke-width="1.3"/><rect x="506.2" y="338.10" width="9.2" height="9.4" rx="1.8" fill="#00e600" stroke="#111" stroke-width="1.3"/><circle cx="491" cy="362.90" r="4.6" fill="#d6d6d8" stroke="#111" stroke-width="1.3"/><circle cx="500.6" cy="362.90" r="4.6" fill="#d6d6d8" stroke="#111" stroke-width="1.3"/><rect x="506.2" y="358.20" width="9.2" height="9.4" rx="1.8" fill="#00e600" stroke="#111" stroke-width="1.3"/><circle cx="491" cy="383.00" r="4.6" fill="#d6d6d8" stroke="#111" stroke-width="1.3"/><circle cx="500.6" cy="383.00" r="4.6" fill="#d6d6d8" stroke="#111" stroke-width="1.3"/><rect x="506.2" y="378.30" width="9.2" height="9.4" rx="1.8" fill="#00e600" stroke="#111" stroke-width="1.3"/><circle cx="491" cy="403.10" r="4.6" fill="#d6d6d8" stroke="#111" stroke-width="1.3"/><circle cx="500.6" cy="403.10" r="4.6" fill="#d6d6d8" stroke="#111" stroke-width="1.3"/><rect x="506.2" y="398.40" width="9.2" height="9.4" rx="1.8" fill="#00e600" stroke="#111" stroke-width="1.3"/><circle cx="491" cy="423.20" r="4.6" fill="#d6d6d8" stroke="#111" stroke-width="1.3"/><circle cx="500.6" cy="423.20" r="4.6" fill="#d6d6d8" stroke="#111" stroke-width="1.3"/><rect x="506.2" y="418.50" width="9.2" height="9.4" rx="1.8" fill="#00e600" stroke="#111" stroke-width="1.3"/><circle cx="491" cy="443.30" r="4.6" fill="#d6d6d8" stroke="#111" stroke-width="1.3"/><circle cx="500.6" cy="443.30" r="4.6" fill="#d6d6d8" stroke="#111" stroke-width="1.3"/><rect x="506.2" y="438.60" width="9.2" height="9.4" rx="1.8" fill="#00e600" stroke="#111" stroke-width="1.3"/><circle cx="491" cy="463.40" r="4.6" fill="#d6d6d8" stroke="#111" stroke-width="1.3"/><circle cx="500.6" cy="463.40" r="4.6" fill="#d6d6d8" stroke="#111" stroke-width="1.3"/><rect x="506.2" y="458.70" width="9.2" height="9.4" rx="1.8" fill="#00e600" stroke="#111" stroke-width="1.3"/><circle cx="491" cy="483.50" r="4.6" fill="#d6d6d8" stroke="#111" stroke-width="1.3"/><circle cx="500.6" cy="483.50" r="4.6" fill="#d6d6d8" stroke="#111" stroke-width="1.3"/><rect x="506.2" y="478.80" width="9.2" height="9.4" rx="1.8" fill="#00e600" stroke="#111" stroke-width="1.3"/><circle cx="491" cy="503.60" r="4.6" fill="#d6d6d8" stroke="#111" stroke-width="1.3"/><circle cx="500.6" cy="503.60" r="4.6" fill="#d6d6d8" stroke="#111" stroke-width="1.3"/><rect x="506.2" y="498.90" width="9.2" height="9.4" rx="1.8" fill="#00e600" stroke="#111" stroke-width="1.3"/><circle cx="491" cy="523.70" r="4.6" fill="#d6d6d8" stroke="#111" stroke-width="1.3"/><circle cx="500.6" cy="523.70" r="4.6" fill="#d6d6d8" stroke="#111" stroke-width="1.3"/><rect x="506.2" y="519.00" width="9.2" height="9.4" rx="1.8" fill="#00e600" stroke="#111" stroke-width="1.3"/><circle cx="491" cy="543.80" r="4.6" fill="#d6d6d8" stroke="#111" stroke-width="1.3"/><circle cx="500.6" cy="543.80" r="4.6" fill="#d6d6d8" stroke="#111" stroke-width="1.3"/><rect x="506.2" y="539.10" width="9.2" height="9.4" rx="1.8" fill="#00e600" stroke="#111" stroke-width="1.3"/><circle cx="491" cy="563.90" r="4.6" fill="#d6d6d8" stroke="#111" stroke-width="1.3"/><circle cx="500.6" cy="563.90" r="4.6" fill="#d6d6d8" stroke="#111" stroke-width="1.3"/><rect x="506.2" y="559.20" width="9.2" height="9.4" rx="1.8" fill="#00e600" stroke="#111" stroke-width="1.3"/><circle cx="491" cy="584.00" r="4.6" fill="#d6d6d8" stroke="#111" stroke-width="1.3"/><circle cx="500.6" cy="584.00" r="4.6" fill="#d6d6d8" stroke="#111" stroke-width="1.3"/><rect x="506.2" y="579.30" width="9.2" height="9.4" rx="1.8" fill="#00e600" stroke="#111" stroke-width="1.3"/><circle cx="491" cy="604.10" r="4.6" fill="#d6d6d8" stroke="#111" stroke-width="1.3"/><circle cx="500.6" cy="604.10" r="4.6" fill="#d6d6d8" stroke="#111" stroke-width="1.3"/><rect x="506.2" y="599.40" width="9.2" height="9.4" rx="1.8" fill="#00e600" stroke="#111" stroke-width="1.3"/><circle cx="491" cy="624.20" r="4.6" fill="#d6d6d8" stroke="#111" stroke-width="1.3"/><circle cx="500.6" cy="624.20" r="4.6" fill="#d6d6d8" stroke="#111" stroke-width="1.3"/><rect x="506.2" y="619.50" width="9.2" height="9.4" rx="1.8" fill="#00e600" stroke="#111" stroke-width="1.3"/><circle cx="491" cy="644.30" r="4.6" fill="#d6d6d8" stroke="#111" stroke-width="1.3"/><circle cx="500.6" cy="644.30" r="4.6" fill="#d6d6d8" stroke="#111" stroke-width="1.3"/><rect x="506.2" y="639.60" width="9.2" height="9.4" rx="1.8" fill="#00e600" stroke="#111" stroke-width="1.3"/><rect x="435.2" y="248.2" width="1.4" height="1.5" fill="#2a2a2a"/><rect x="437.9" y="248.2" width="1.4" height="1.5" fill="#2a2a2a"/><rect x="440.6" y="248.2" width="1.4" height="1.5" fill="#2a2a2a"/><rect x="473.2" y="248.2" width="1.4" height="1.5" fill="#2a2a2a"/><rect x="475.9" y="248.2" width="1.4" height="1.5" fill="#2a2a2a"/><rect x="478.6" y="248.2" width="1.4" height="1.5" fill="#2a2a2a"/><rect x="510.0" y="248.2" width="1.4" height="1.5" fill="#2a2a2a"/><rect x="512.7" y="248.2" width="1.4" height="1.5" fill="#2a2a2a"/><rect x="515.4" y="248.2" width="1.4" height="1.5" fill="#2a2a2a"/><rect x="890.6" y="248.2" width="1.4" height="1.5" fill="#2a2a2a"/><rect x="893.3" y="248.2" width="1.4" height="1.5" fill="#2a2a2a"/><rect x="896.0" y="248.2" width="1.4" height="1.5" fill="#2a2a2a"/><rect x="920.4" y="248.2" width="1.4" height="1.5" fill="#2a2a2a"/><rect x="923.1" y="248.2" width="1.4" height="1.5" fill="#2a2a2a"/><rect x="925.8" y="248.2" width="1.4" height="1.5" fill="#2a2a2a"/><rect x="972.2" y="248.2" width="1.4" height="1.5" fill="#2a2a2a"/><rect x="974.9" y="248.2" width="1.4" height="1.5" fill="#2a2a2a"/><rect x="977.6" y="248.2" width="1.4" height="1.5" fill="#2a2a2a"/><path d="M1155.2 261.4 H1163.6 L1159.4 257.2 Z" fill="#3d4e5e"/><path d="M1155.2 277.2 H1163.6 L1159.4 281.4 Z" fill="#3d4e5e"/><rect x="1153.6" y="292.4" width="13" height="4.2" rx="1" fill="#fff" stroke="#9aa6b2" stroke-width="1"/><path d="M1155.2 629.2 H1163.6 L1159.4 625 Z" fill="#3d4e5e"/><path d="M1155.2 644.2 H1163.6 L1159.4 648.4 Z" fill="#3d4e5e"/><path d="M403.6 669 L407.8 664.8 V673.2 Z" fill="#3d4e5e"/><path d="M428.2 669 L424 664.8 V673.2 Z" fill="#3d4e5e"/><path d="M1116 669 L1120.2 664.8 V673.2 Z" fill="#3d4e5e"/><path d="M1140.4 669 L1136.2 664.8 V673.2 Z" fill="#3d4e5e"/><g fill="#a0a8b0"><rect x="684.6" y="665.6" width="1.2" height="1.2"/><rect x="687.4" y="665.6" width="1.2" height="1.2"/><rect x="690.2" y="665.6" width="1.2" height="1.2"/><rect x="684.6" y="668.8" width="1.2" height="1.2"/><rect x="687.4" y="668.8" width="1.2" height="1.2"/><rect x="690.2" y="668.8" width="1.2" height="1.2"/></g><path d="M224.8 740.2 L229.3 736 V744.4 Z" fill="#3d4e5e"/><path d="M247.3 740.2 L243 736 V744.4 Z" fill="#3d4e5e"/><rect x="256" y="447.0" width="1.4" height="1.6" fill="#707880"/><rect x="256" y="450.7" width="1.4" height="1.6" fill="#707880"/><rect x="256" y="454.4" width="1.4" height="1.6" fill="#707880"/><rect x="256" y="458.1" width="1.4" height="1.6" fill="#707880"/><rect x="256" y="461.8" width="1.4" height="1.6" fill="#707880"/><path d="M586 795 H611.8 L599.4 807.8 H586 Z" fill="url(#gSAP)"/><text x="587" y="805.6" font-family="Liberation Sans" font-weight="bold" font-size="11" fill="#fff" stroke="#fff" stroke-width="0.4" textLength="17.5" lengthAdjust="spacingAndGlyphs">SAP</text><path d="M1152.6 801 L1156.4 797.4 V804.6 Z" fill="#fff" stroke="#6a7a8a" stroke-width="1"/><path d="M1159 812 L1170 801 M1163 812 L1170 805 M1167 812 L1170 809" stroke="#c8c8c8" stroke-width="1"/></svg>
<span class="t" style="left:756.00px;top:177.95px;font-size:13px;line-height:13px;color:#161616;transform:scaleX(0.958);transform-origin:0 0;">IDoc</span>
</body></html>
